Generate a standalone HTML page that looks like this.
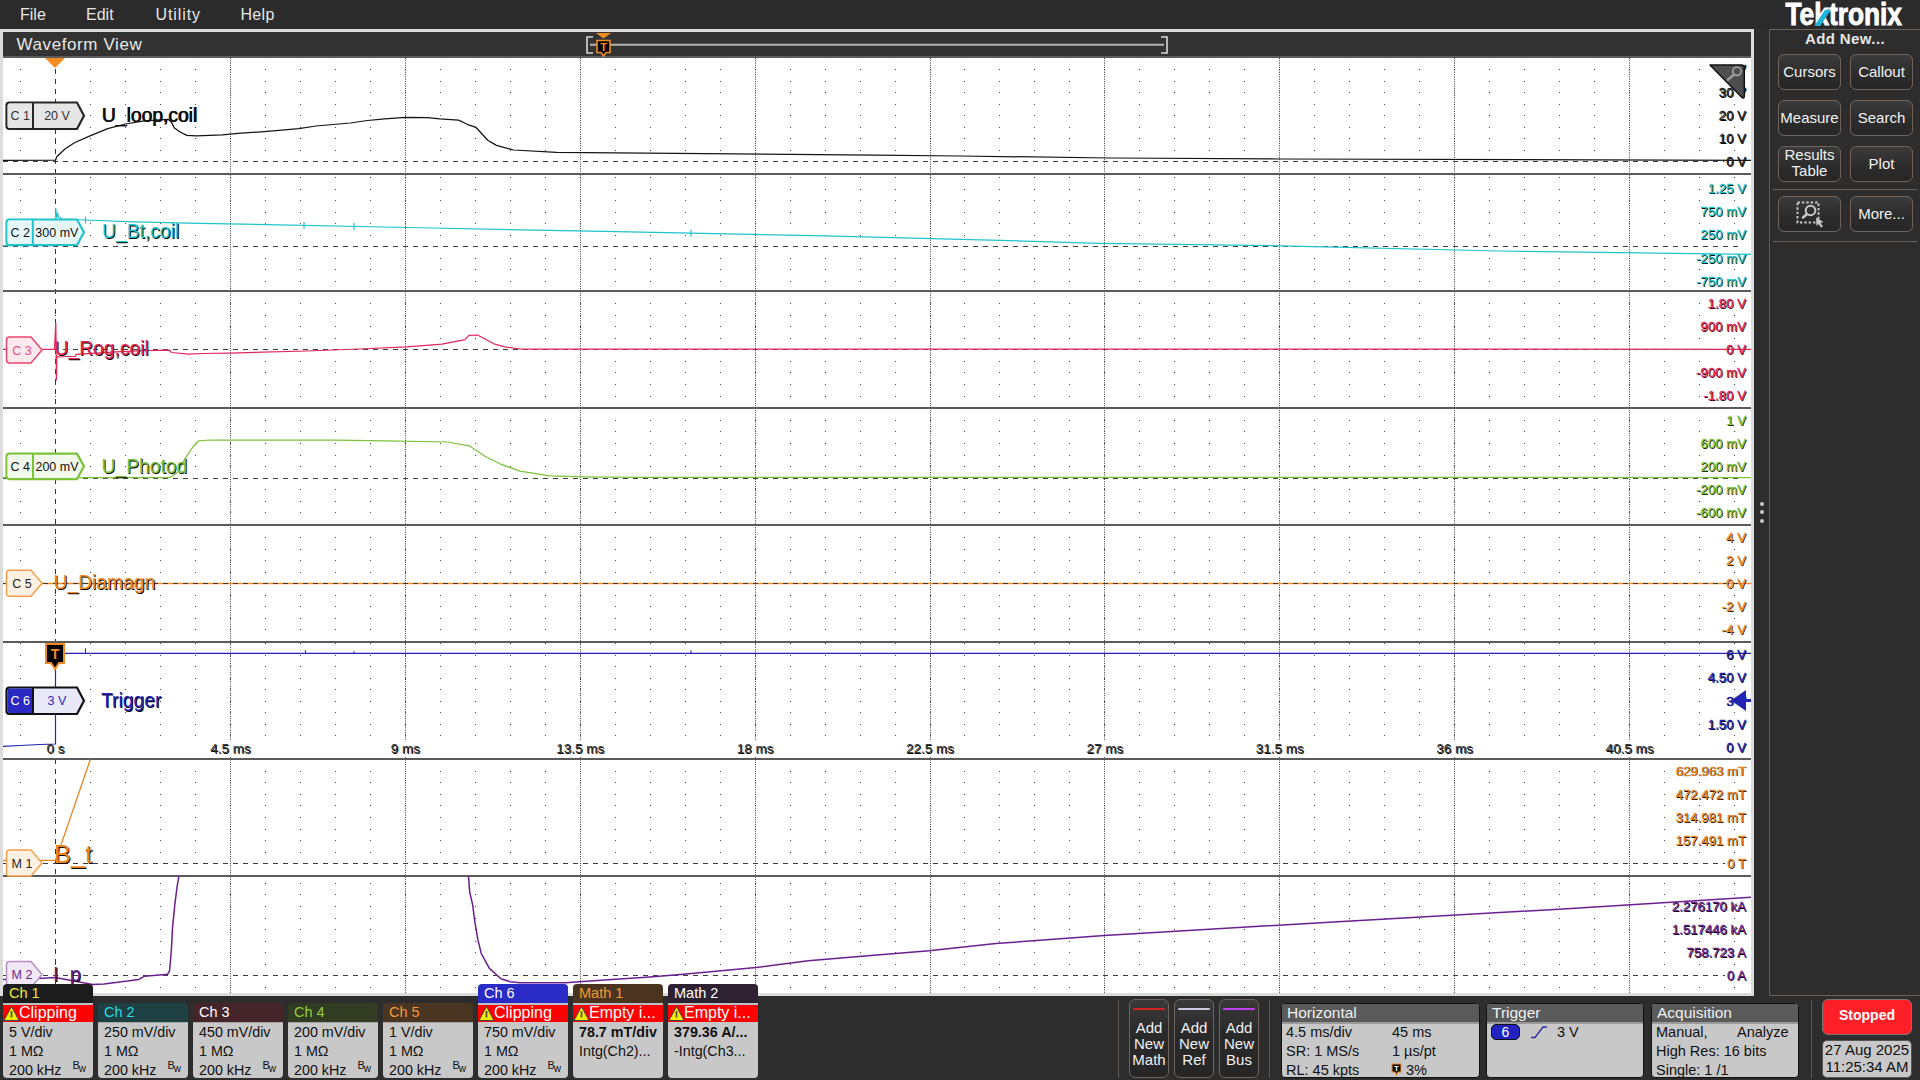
<!DOCTYPE html>
<html><head><meta charset="utf-8">
<style>
*{margin:0;padding:0;box-sizing:border-box}
html,body{width:1920px;height:1080px;overflow:hidden;background:#2d2d2d;font-family:"Liberation Sans", sans-serif;}
.abs{position:absolute}
#menu{position:absolute;left:0;top:0;width:1920px;height:29px;background:#2b2b2b;}
#menu span{position:absolute;top:5.5px;font-size:16px;color:#e6e6e6;}
#win{position:absolute;left:0;top:29px;width:1754px;height:967px;background:#dcdcdc;}
#title{position:absolute;left:3px;top:3px;width:1748px;height:24px;background:#333;}
#title .t{position:absolute;left:13.5px;top:3px;font-size:17px;color:#e8e8e8;letter-spacing:0.6px}
#grat{position:absolute;left:0;top:0;}
#side{position:absolute;left:1769px;top:29px;width:151px;height:967px;border-left:1px solid #5c5f62;border-top:1px solid #6a625c;border-bottom:1px solid #6a625c;}
.btn{position:absolute;width:63px;height:36px;border-radius:6px;border:1px solid #6e645c;background:linear-gradient(#3b3b3b,#2b2b2b 60%,#262626);color:#f2f2f2;font-size:15px;text-align:center;}
.bb{position:absolute;top:984px;width:90px;height:94px;}
.bh{position:absolute;left:0;width:90px;height:19px;font-size:15px;padding-left:6px;line-height:19px;}
.bbody{position:absolute;left:0;top:37px;width:90px;height:57px;background:#c8c8c8;border-radius:0 0 4px 4px;font-size:14.5px;color:#111;padding-left:6px;line-height:19px;}
.warn{position:absolute;left:0;top:21px;width:90px;height:17px;background:#f00;color:#fff;font-size:15px;line-height:17px;padding-left:19px;}
</style></head><body>
<div id="menu">
 <span style="left:20px">File</span><span style="left:86px">Edit</span><span style="left:155.5px;letter-spacing:0.9px">Utility</span><span style="left:240.5px;letter-spacing:0.3px">Help</span>
</div>
<div id="win">
 <div id="title"><div class="t">Waveform View</div></div>
</div>
<svg id="grat" width="1920" height="1080" style="position:absolute;left:0;top:0" font-family='"Liberation Sans", sans-serif'>
<rect x="3" y="56" width="1748" height="2" fill="#5c5c5c"/>
<rect x="3" y="58" width="1748" height="935" fill="#fff"/>
<g>
<line x1="590" y1="44.8" x2="1164" y2="44.8" stroke="#b4b4b4" stroke-width="2"/>
<path d="M593 37 H587 V53 H593" fill="none" stroke="#d8d8d8" stroke-width="1.6"/>
<path d="M1161 37 H1167 V53 H1161" fill="none" stroke="#d8d8d8" stroke-width="1.6"/>
<path d="M596 33 H611 L603.5 38.5 Z" fill="#f78c20"/>
<path d="M597 40.5 H610 V52.5 H606 L603.5 56 L601 52.5 H597 Z" fill="#000" stroke="#f08a24" stroke-width="1.6"/>
<text x="603.5" y="51" font-size="11" font-weight="bold" fill="#f08a24" text-anchor="middle">T</text>
</g>
<path fill="#4a4a4a" d="M20 150h1v1h-1zM55 150h1v1h-1zM90 150h1v1h-1zM125 150h1v1h-1zM160 150h1v1h-1zM195 150h1v1h-1zM230 150h1v1h-1zM265 150h1v1h-1zM300 150h1v1h-1zM335 150h1v1h-1zM370 150h1v1h-1zM405 150h1v1h-1zM440 150h1v1h-1zM475 150h1v1h-1zM510 150h1v1h-1zM545 150h1v1h-1zM580 150h1v1h-1zM615 150h1v1h-1zM650 150h1v1h-1zM685 150h1v1h-1zM720 150h1v1h-1zM755 150h1v1h-1zM790 150h1v1h-1zM825 150h1v1h-1zM860 150h1v1h-1zM895 150h1v1h-1zM930 150h1v1h-1zM964 150h1v1h-1zM999 150h1v1h-1zM1034 150h1v1h-1zM1069 150h1v1h-1zM1104 150h1v1h-1zM1139 150h1v1h-1zM1174 150h1v1h-1zM1209 150h1v1h-1zM1244 150h1v1h-1zM1279 150h1v1h-1zM1314 150h1v1h-1zM1349 150h1v1h-1zM1384 150h1v1h-1zM1419 150h1v1h-1zM1454 150h1v1h-1zM1489 150h1v1h-1zM1524 150h1v1h-1zM1559 150h1v1h-1zM1594 150h1v1h-1zM1629 150h1v1h-1zM1664 150h1v1h-1zM1699 150h1v1h-1zM1734 150h1v1h-1zM20 138h1v1h-1zM55 138h1v1h-1zM90 138h1v1h-1zM125 138h1v1h-1zM160 138h1v1h-1zM195 138h1v1h-1zM230 138h1v1h-1zM265 138h1v1h-1zM300 138h1v1h-1zM335 138h1v1h-1zM370 138h1v1h-1zM405 138h1v1h-1zM440 138h1v1h-1zM475 138h1v1h-1zM510 138h1v1h-1zM545 138h1v1h-1zM580 138h1v1h-1zM615 138h1v1h-1zM650 138h1v1h-1zM685 138h1v1h-1zM720 138h1v1h-1zM755 138h1v1h-1zM790 138h1v1h-1zM825 138h1v1h-1zM860 138h1v1h-1zM895 138h1v1h-1zM930 138h1v1h-1zM964 138h1v1h-1zM999 138h1v1h-1zM1034 138h1v1h-1zM1069 138h1v1h-1zM1104 138h1v1h-1zM1139 138h1v1h-1zM1174 138h1v1h-1zM1209 138h1v1h-1zM1244 138h1v1h-1zM1279 138h1v1h-1zM1314 138h1v1h-1zM1349 138h1v1h-1zM1384 138h1v1h-1zM1419 138h1v1h-1zM1454 138h1v1h-1zM1489 138h1v1h-1zM1524 138h1v1h-1zM1559 138h1v1h-1zM1594 138h1v1h-1zM1629 138h1v1h-1zM1664 138h1v1h-1zM1699 138h1v1h-1zM1734 138h1v1h-1zM20 127h1v1h-1zM55 127h1v1h-1zM90 127h1v1h-1zM125 127h1v1h-1zM160 127h1v1h-1zM195 127h1v1h-1zM230 127h1v1h-1zM265 127h1v1h-1zM300 127h1v1h-1zM335 127h1v1h-1zM370 127h1v1h-1zM405 127h1v1h-1zM440 127h1v1h-1zM475 127h1v1h-1zM510 127h1v1h-1zM545 127h1v1h-1zM580 127h1v1h-1zM615 127h1v1h-1zM650 127h1v1h-1zM685 127h1v1h-1zM720 127h1v1h-1zM755 127h1v1h-1zM790 127h1v1h-1zM825 127h1v1h-1zM860 127h1v1h-1zM895 127h1v1h-1zM930 127h1v1h-1zM964 127h1v1h-1zM999 127h1v1h-1zM1034 127h1v1h-1zM1069 127h1v1h-1zM1104 127h1v1h-1zM1139 127h1v1h-1zM1174 127h1v1h-1zM1209 127h1v1h-1zM1244 127h1v1h-1zM1279 127h1v1h-1zM1314 127h1v1h-1zM1349 127h1v1h-1zM1384 127h1v1h-1zM1419 127h1v1h-1zM1454 127h1v1h-1zM1489 127h1v1h-1zM1524 127h1v1h-1zM1559 127h1v1h-1zM1594 127h1v1h-1zM1629 127h1v1h-1zM1664 127h1v1h-1zM1699 127h1v1h-1zM1734 127h1v1h-1zM20 115h1v1h-1zM55 115h1v1h-1zM90 115h1v1h-1zM125 115h1v1h-1zM160 115h1v1h-1zM195 115h1v1h-1zM230 115h1v1h-1zM265 115h1v1h-1zM300 115h1v1h-1zM335 115h1v1h-1zM370 115h1v1h-1zM405 115h1v1h-1zM440 115h1v1h-1zM475 115h1v1h-1zM510 115h1v1h-1zM545 115h1v1h-1zM580 115h1v1h-1zM615 115h1v1h-1zM650 115h1v1h-1zM685 115h1v1h-1zM720 115h1v1h-1zM755 115h1v1h-1zM790 115h1v1h-1zM825 115h1v1h-1zM860 115h1v1h-1zM895 115h1v1h-1zM930 115h1v1h-1zM964 115h1v1h-1zM999 115h1v1h-1zM1034 115h1v1h-1zM1069 115h1v1h-1zM1104 115h1v1h-1zM1139 115h1v1h-1zM1174 115h1v1h-1zM1209 115h1v1h-1zM1244 115h1v1h-1zM1279 115h1v1h-1zM1314 115h1v1h-1zM1349 115h1v1h-1zM1384 115h1v1h-1zM1419 115h1v1h-1zM1454 115h1v1h-1zM1489 115h1v1h-1zM1524 115h1v1h-1zM1559 115h1v1h-1zM1594 115h1v1h-1zM1629 115h1v1h-1zM1664 115h1v1h-1zM1699 115h1v1h-1zM1734 115h1v1h-1zM20 104h1v1h-1zM55 104h1v1h-1zM90 104h1v1h-1zM125 104h1v1h-1zM160 104h1v1h-1zM195 104h1v1h-1zM230 104h1v1h-1zM265 104h1v1h-1zM300 104h1v1h-1zM335 104h1v1h-1zM370 104h1v1h-1zM405 104h1v1h-1zM440 104h1v1h-1zM475 104h1v1h-1zM510 104h1v1h-1zM545 104h1v1h-1zM580 104h1v1h-1zM615 104h1v1h-1zM650 104h1v1h-1zM685 104h1v1h-1zM720 104h1v1h-1zM755 104h1v1h-1zM790 104h1v1h-1zM825 104h1v1h-1zM860 104h1v1h-1zM895 104h1v1h-1zM930 104h1v1h-1zM964 104h1v1h-1zM999 104h1v1h-1zM1034 104h1v1h-1zM1069 104h1v1h-1zM1104 104h1v1h-1zM1139 104h1v1h-1zM1174 104h1v1h-1zM1209 104h1v1h-1zM1244 104h1v1h-1zM1279 104h1v1h-1zM1314 104h1v1h-1zM1349 104h1v1h-1zM1384 104h1v1h-1zM1419 104h1v1h-1zM1454 104h1v1h-1zM1489 104h1v1h-1zM1524 104h1v1h-1zM1559 104h1v1h-1zM1594 104h1v1h-1zM1629 104h1v1h-1zM1664 104h1v1h-1zM1699 104h1v1h-1zM1734 104h1v1h-1zM20 92h1v1h-1zM55 92h1v1h-1zM90 92h1v1h-1zM125 92h1v1h-1zM160 92h1v1h-1zM195 92h1v1h-1zM230 92h1v1h-1zM265 92h1v1h-1zM300 92h1v1h-1zM335 92h1v1h-1zM370 92h1v1h-1zM405 92h1v1h-1zM440 92h1v1h-1zM475 92h1v1h-1zM510 92h1v1h-1zM545 92h1v1h-1zM580 92h1v1h-1zM615 92h1v1h-1zM650 92h1v1h-1zM685 92h1v1h-1zM720 92h1v1h-1zM755 92h1v1h-1zM790 92h1v1h-1zM825 92h1v1h-1zM860 92h1v1h-1zM895 92h1v1h-1zM930 92h1v1h-1zM964 92h1v1h-1zM999 92h1v1h-1zM1034 92h1v1h-1zM1069 92h1v1h-1zM1104 92h1v1h-1zM1139 92h1v1h-1zM1174 92h1v1h-1zM1209 92h1v1h-1zM1244 92h1v1h-1zM1279 92h1v1h-1zM1314 92h1v1h-1zM1349 92h1v1h-1zM1384 92h1v1h-1zM1419 92h1v1h-1zM1454 92h1v1h-1zM1489 92h1v1h-1zM1524 92h1v1h-1zM1559 92h1v1h-1zM1594 92h1v1h-1zM1629 92h1v1h-1zM1664 92h1v1h-1zM1699 92h1v1h-1zM1734 92h1v1h-1zM20 81h1v1h-1zM55 81h1v1h-1zM90 81h1v1h-1zM125 81h1v1h-1zM160 81h1v1h-1zM195 81h1v1h-1zM230 81h1v1h-1zM265 81h1v1h-1zM300 81h1v1h-1zM335 81h1v1h-1zM370 81h1v1h-1zM405 81h1v1h-1zM440 81h1v1h-1zM475 81h1v1h-1zM510 81h1v1h-1zM545 81h1v1h-1zM580 81h1v1h-1zM615 81h1v1h-1zM650 81h1v1h-1zM685 81h1v1h-1zM720 81h1v1h-1zM755 81h1v1h-1zM790 81h1v1h-1zM825 81h1v1h-1zM860 81h1v1h-1zM895 81h1v1h-1zM930 81h1v1h-1zM964 81h1v1h-1zM999 81h1v1h-1zM1034 81h1v1h-1zM1069 81h1v1h-1zM1104 81h1v1h-1zM1139 81h1v1h-1zM1174 81h1v1h-1zM1209 81h1v1h-1zM1244 81h1v1h-1zM1279 81h1v1h-1zM1314 81h1v1h-1zM1349 81h1v1h-1zM1384 81h1v1h-1zM1419 81h1v1h-1zM1454 81h1v1h-1zM1489 81h1v1h-1zM1524 81h1v1h-1zM1559 81h1v1h-1zM1594 81h1v1h-1zM1629 81h1v1h-1zM1664 81h1v1h-1zM1699 81h1v1h-1zM1734 81h1v1h-1zM20 69h1v1h-1zM55 69h1v1h-1zM90 69h1v1h-1zM125 69h1v1h-1zM160 69h1v1h-1zM195 69h1v1h-1zM230 69h1v1h-1zM265 69h1v1h-1zM300 69h1v1h-1zM335 69h1v1h-1zM370 69h1v1h-1zM405 69h1v1h-1zM440 69h1v1h-1zM475 69h1v1h-1zM510 69h1v1h-1zM545 69h1v1h-1zM580 69h1v1h-1zM615 69h1v1h-1zM650 69h1v1h-1zM685 69h1v1h-1zM720 69h1v1h-1zM755 69h1v1h-1zM790 69h1v1h-1zM825 69h1v1h-1zM860 69h1v1h-1zM895 69h1v1h-1zM930 69h1v1h-1zM964 69h1v1h-1zM999 69h1v1h-1zM1034 69h1v1h-1zM1069 69h1v1h-1zM1104 69h1v1h-1zM1139 69h1v1h-1zM1174 69h1v1h-1zM1209 69h1v1h-1zM1244 69h1v1h-1zM1279 69h1v1h-1zM1314 69h1v1h-1zM1349 69h1v1h-1zM1384 69h1v1h-1zM1419 69h1v1h-1zM1454 69h1v1h-1zM1489 69h1v1h-1zM1524 69h1v1h-1zM1559 69h1v1h-1zM1594 69h1v1h-1zM1629 69h1v1h-1zM1664 69h1v1h-1zM1699 69h1v1h-1zM1734 69h1v1h-1zM20 57h1v1h-1zM55 57h1v1h-1zM90 57h1v1h-1zM125 57h1v1h-1zM160 57h1v1h-1zM195 57h1v1h-1zM230 57h1v1h-1zM265 57h1v1h-1zM300 57h1v1h-1zM335 57h1v1h-1zM370 57h1v1h-1zM405 57h1v1h-1zM440 57h1v1h-1zM475 57h1v1h-1zM510 57h1v1h-1zM545 57h1v1h-1zM580 57h1v1h-1zM615 57h1v1h-1zM650 57h1v1h-1zM685 57h1v1h-1zM720 57h1v1h-1zM755 57h1v1h-1zM790 57h1v1h-1zM825 57h1v1h-1zM860 57h1v1h-1zM895 57h1v1h-1zM930 57h1v1h-1zM964 57h1v1h-1zM999 57h1v1h-1zM1034 57h1v1h-1zM1069 57h1v1h-1zM1104 57h1v1h-1zM1139 57h1v1h-1zM1174 57h1v1h-1zM1209 57h1v1h-1zM1244 57h1v1h-1zM1279 57h1v1h-1zM1314 57h1v1h-1zM1349 57h1v1h-1zM1384 57h1v1h-1zM1419 57h1v1h-1zM1454 57h1v1h-1zM1489 57h1v1h-1zM1524 57h1v1h-1zM1559 57h1v1h-1zM1594 57h1v1h-1zM1629 57h1v1h-1zM1664 57h1v1h-1zM1699 57h1v1h-1zM1734 57h1v1h-1zM20 173h1v1h-1zM55 173h1v1h-1zM90 173h1v1h-1zM125 173h1v1h-1zM160 173h1v1h-1zM195 173h1v1h-1zM230 173h1v1h-1zM265 173h1v1h-1zM300 173h1v1h-1zM335 173h1v1h-1zM370 173h1v1h-1zM405 173h1v1h-1zM440 173h1v1h-1zM475 173h1v1h-1zM510 173h1v1h-1zM545 173h1v1h-1zM580 173h1v1h-1zM615 173h1v1h-1zM650 173h1v1h-1zM685 173h1v1h-1zM720 173h1v1h-1zM755 173h1v1h-1zM790 173h1v1h-1zM825 173h1v1h-1zM860 173h1v1h-1zM895 173h1v1h-1zM930 173h1v1h-1zM964 173h1v1h-1zM999 173h1v1h-1zM1034 173h1v1h-1zM1069 173h1v1h-1zM1104 173h1v1h-1zM1139 173h1v1h-1zM1174 173h1v1h-1zM1209 173h1v1h-1zM1244 173h1v1h-1zM1279 173h1v1h-1zM1314 173h1v1h-1zM1349 173h1v1h-1zM1384 173h1v1h-1zM1419 173h1v1h-1zM1454 173h1v1h-1zM1489 173h1v1h-1zM1524 173h1v1h-1zM1559 173h1v1h-1zM1594 173h1v1h-1zM1629 173h1v1h-1zM1664 173h1v1h-1zM1699 173h1v1h-1zM1734 173h1v1h-1zM20 235h1v1h-1zM55 235h1v1h-1zM90 235h1v1h-1zM125 235h1v1h-1zM160 235h1v1h-1zM195 235h1v1h-1zM230 235h1v1h-1zM265 235h1v1h-1zM300 235h1v1h-1zM335 235h1v1h-1zM370 235h1v1h-1zM405 235h1v1h-1zM440 235h1v1h-1zM475 235h1v1h-1zM510 235h1v1h-1zM545 235h1v1h-1zM580 235h1v1h-1zM615 235h1v1h-1zM650 235h1v1h-1zM685 235h1v1h-1zM720 235h1v1h-1zM755 235h1v1h-1zM790 235h1v1h-1zM825 235h1v1h-1zM860 235h1v1h-1zM895 235h1v1h-1zM930 235h1v1h-1zM964 235h1v1h-1zM999 235h1v1h-1zM1034 235h1v1h-1zM1069 235h1v1h-1zM1104 235h1v1h-1zM1139 235h1v1h-1zM1174 235h1v1h-1zM1209 235h1v1h-1zM1244 235h1v1h-1zM1279 235h1v1h-1zM1314 235h1v1h-1zM1349 235h1v1h-1zM1384 235h1v1h-1zM1419 235h1v1h-1zM1454 235h1v1h-1zM1489 235h1v1h-1zM1524 235h1v1h-1zM1559 235h1v1h-1zM1594 235h1v1h-1zM1629 235h1v1h-1zM1664 235h1v1h-1zM1699 235h1v1h-1zM1734 235h1v1h-1zM20 223h1v1h-1zM55 223h1v1h-1zM90 223h1v1h-1zM125 223h1v1h-1zM160 223h1v1h-1zM195 223h1v1h-1zM230 223h1v1h-1zM265 223h1v1h-1zM300 223h1v1h-1zM335 223h1v1h-1zM370 223h1v1h-1zM405 223h1v1h-1zM440 223h1v1h-1zM475 223h1v1h-1zM510 223h1v1h-1zM545 223h1v1h-1zM580 223h1v1h-1zM615 223h1v1h-1zM650 223h1v1h-1zM685 223h1v1h-1zM720 223h1v1h-1zM755 223h1v1h-1zM790 223h1v1h-1zM825 223h1v1h-1zM860 223h1v1h-1zM895 223h1v1h-1zM930 223h1v1h-1zM964 223h1v1h-1zM999 223h1v1h-1zM1034 223h1v1h-1zM1069 223h1v1h-1zM1104 223h1v1h-1zM1139 223h1v1h-1zM1174 223h1v1h-1zM1209 223h1v1h-1zM1244 223h1v1h-1zM1279 223h1v1h-1zM1314 223h1v1h-1zM1349 223h1v1h-1zM1384 223h1v1h-1zM1419 223h1v1h-1zM1454 223h1v1h-1zM1489 223h1v1h-1zM1524 223h1v1h-1zM1559 223h1v1h-1zM1594 223h1v1h-1zM1629 223h1v1h-1zM1664 223h1v1h-1zM1699 223h1v1h-1zM1734 223h1v1h-1zM20 212h1v1h-1zM55 212h1v1h-1zM90 212h1v1h-1zM125 212h1v1h-1zM160 212h1v1h-1zM195 212h1v1h-1zM230 212h1v1h-1zM265 212h1v1h-1zM300 212h1v1h-1zM335 212h1v1h-1zM370 212h1v1h-1zM405 212h1v1h-1zM440 212h1v1h-1zM475 212h1v1h-1zM510 212h1v1h-1zM545 212h1v1h-1zM580 212h1v1h-1zM615 212h1v1h-1zM650 212h1v1h-1zM685 212h1v1h-1zM720 212h1v1h-1zM755 212h1v1h-1zM790 212h1v1h-1zM825 212h1v1h-1zM860 212h1v1h-1zM895 212h1v1h-1zM930 212h1v1h-1zM964 212h1v1h-1zM999 212h1v1h-1zM1034 212h1v1h-1zM1069 212h1v1h-1zM1104 212h1v1h-1zM1139 212h1v1h-1zM1174 212h1v1h-1zM1209 212h1v1h-1zM1244 212h1v1h-1zM1279 212h1v1h-1zM1314 212h1v1h-1zM1349 212h1v1h-1zM1384 212h1v1h-1zM1419 212h1v1h-1zM1454 212h1v1h-1zM1489 212h1v1h-1zM1524 212h1v1h-1zM1559 212h1v1h-1zM1594 212h1v1h-1zM1629 212h1v1h-1zM1664 212h1v1h-1zM1699 212h1v1h-1zM1734 212h1v1h-1zM20 200h1v1h-1zM55 200h1v1h-1zM90 200h1v1h-1zM125 200h1v1h-1zM160 200h1v1h-1zM195 200h1v1h-1zM230 200h1v1h-1zM265 200h1v1h-1zM300 200h1v1h-1zM335 200h1v1h-1zM370 200h1v1h-1zM405 200h1v1h-1zM440 200h1v1h-1zM475 200h1v1h-1zM510 200h1v1h-1zM545 200h1v1h-1zM580 200h1v1h-1zM615 200h1v1h-1zM650 200h1v1h-1zM685 200h1v1h-1zM720 200h1v1h-1zM755 200h1v1h-1zM790 200h1v1h-1zM825 200h1v1h-1zM860 200h1v1h-1zM895 200h1v1h-1zM930 200h1v1h-1zM964 200h1v1h-1zM999 200h1v1h-1zM1034 200h1v1h-1zM1069 200h1v1h-1zM1104 200h1v1h-1zM1139 200h1v1h-1zM1174 200h1v1h-1zM1209 200h1v1h-1zM1244 200h1v1h-1zM1279 200h1v1h-1zM1314 200h1v1h-1zM1349 200h1v1h-1zM1384 200h1v1h-1zM1419 200h1v1h-1zM1454 200h1v1h-1zM1489 200h1v1h-1zM1524 200h1v1h-1zM1559 200h1v1h-1zM1594 200h1v1h-1zM1629 200h1v1h-1zM1664 200h1v1h-1zM1699 200h1v1h-1zM1734 200h1v1h-1zM20 189h1v1h-1zM55 189h1v1h-1zM90 189h1v1h-1zM125 189h1v1h-1zM160 189h1v1h-1zM195 189h1v1h-1zM230 189h1v1h-1zM265 189h1v1h-1zM300 189h1v1h-1zM335 189h1v1h-1zM370 189h1v1h-1zM405 189h1v1h-1zM440 189h1v1h-1zM475 189h1v1h-1zM510 189h1v1h-1zM545 189h1v1h-1zM580 189h1v1h-1zM615 189h1v1h-1zM650 189h1v1h-1zM685 189h1v1h-1zM720 189h1v1h-1zM755 189h1v1h-1zM790 189h1v1h-1zM825 189h1v1h-1zM860 189h1v1h-1zM895 189h1v1h-1zM930 189h1v1h-1zM964 189h1v1h-1zM999 189h1v1h-1zM1034 189h1v1h-1zM1069 189h1v1h-1zM1104 189h1v1h-1zM1139 189h1v1h-1zM1174 189h1v1h-1zM1209 189h1v1h-1zM1244 189h1v1h-1zM1279 189h1v1h-1zM1314 189h1v1h-1zM1349 189h1v1h-1zM1384 189h1v1h-1zM1419 189h1v1h-1zM1454 189h1v1h-1zM1489 189h1v1h-1zM1524 189h1v1h-1zM1559 189h1v1h-1zM1594 189h1v1h-1zM1629 189h1v1h-1zM1664 189h1v1h-1zM1699 189h1v1h-1zM1734 189h1v1h-1zM20 177h1v1h-1zM55 177h1v1h-1zM90 177h1v1h-1zM125 177h1v1h-1zM160 177h1v1h-1zM195 177h1v1h-1zM230 177h1v1h-1zM265 177h1v1h-1zM300 177h1v1h-1zM335 177h1v1h-1zM370 177h1v1h-1zM405 177h1v1h-1zM440 177h1v1h-1zM475 177h1v1h-1zM510 177h1v1h-1zM545 177h1v1h-1zM580 177h1v1h-1zM615 177h1v1h-1zM650 177h1v1h-1zM685 177h1v1h-1zM720 177h1v1h-1zM755 177h1v1h-1zM790 177h1v1h-1zM825 177h1v1h-1zM860 177h1v1h-1zM895 177h1v1h-1zM930 177h1v1h-1zM964 177h1v1h-1zM999 177h1v1h-1zM1034 177h1v1h-1zM1069 177h1v1h-1zM1104 177h1v1h-1zM1139 177h1v1h-1zM1174 177h1v1h-1zM1209 177h1v1h-1zM1244 177h1v1h-1zM1279 177h1v1h-1zM1314 177h1v1h-1zM1349 177h1v1h-1zM1384 177h1v1h-1zM1419 177h1v1h-1zM1454 177h1v1h-1zM1489 177h1v1h-1zM1524 177h1v1h-1zM1559 177h1v1h-1zM1594 177h1v1h-1zM1629 177h1v1h-1zM1664 177h1v1h-1zM1699 177h1v1h-1zM1734 177h1v1h-1zM20 258h1v1h-1zM55 258h1v1h-1zM90 258h1v1h-1zM125 258h1v1h-1zM160 258h1v1h-1zM195 258h1v1h-1zM230 258h1v1h-1zM265 258h1v1h-1zM300 258h1v1h-1zM335 258h1v1h-1zM370 258h1v1h-1zM405 258h1v1h-1zM440 258h1v1h-1zM475 258h1v1h-1zM510 258h1v1h-1zM545 258h1v1h-1zM580 258h1v1h-1zM615 258h1v1h-1zM650 258h1v1h-1zM685 258h1v1h-1zM720 258h1v1h-1zM755 258h1v1h-1zM790 258h1v1h-1zM825 258h1v1h-1zM860 258h1v1h-1zM895 258h1v1h-1zM930 258h1v1h-1zM964 258h1v1h-1zM999 258h1v1h-1zM1034 258h1v1h-1zM1069 258h1v1h-1zM1104 258h1v1h-1zM1139 258h1v1h-1zM1174 258h1v1h-1zM1209 258h1v1h-1zM1244 258h1v1h-1zM1279 258h1v1h-1zM1314 258h1v1h-1zM1349 258h1v1h-1zM1384 258h1v1h-1zM1419 258h1v1h-1zM1454 258h1v1h-1zM1489 258h1v1h-1zM1524 258h1v1h-1zM1559 258h1v1h-1zM1594 258h1v1h-1zM1629 258h1v1h-1zM1664 258h1v1h-1zM1699 258h1v1h-1zM1734 258h1v1h-1zM20 269h1v1h-1zM55 269h1v1h-1zM90 269h1v1h-1zM125 269h1v1h-1zM160 269h1v1h-1zM195 269h1v1h-1zM230 269h1v1h-1zM265 269h1v1h-1zM300 269h1v1h-1zM335 269h1v1h-1zM370 269h1v1h-1zM405 269h1v1h-1zM440 269h1v1h-1zM475 269h1v1h-1zM510 269h1v1h-1zM545 269h1v1h-1zM580 269h1v1h-1zM615 269h1v1h-1zM650 269h1v1h-1zM685 269h1v1h-1zM720 269h1v1h-1zM755 269h1v1h-1zM790 269h1v1h-1zM825 269h1v1h-1zM860 269h1v1h-1zM895 269h1v1h-1zM930 269h1v1h-1zM964 269h1v1h-1zM999 269h1v1h-1zM1034 269h1v1h-1zM1069 269h1v1h-1zM1104 269h1v1h-1zM1139 269h1v1h-1zM1174 269h1v1h-1zM1209 269h1v1h-1zM1244 269h1v1h-1zM1279 269h1v1h-1zM1314 269h1v1h-1zM1349 269h1v1h-1zM1384 269h1v1h-1zM1419 269h1v1h-1zM1454 269h1v1h-1zM1489 269h1v1h-1zM1524 269h1v1h-1zM1559 269h1v1h-1zM1594 269h1v1h-1zM1629 269h1v1h-1zM1664 269h1v1h-1zM1699 269h1v1h-1zM1734 269h1v1h-1zM20 281h1v1h-1zM55 281h1v1h-1zM90 281h1v1h-1zM125 281h1v1h-1zM160 281h1v1h-1zM195 281h1v1h-1zM230 281h1v1h-1zM265 281h1v1h-1zM300 281h1v1h-1zM335 281h1v1h-1zM370 281h1v1h-1zM405 281h1v1h-1zM440 281h1v1h-1zM475 281h1v1h-1zM510 281h1v1h-1zM545 281h1v1h-1zM580 281h1v1h-1zM615 281h1v1h-1zM650 281h1v1h-1zM685 281h1v1h-1zM720 281h1v1h-1zM755 281h1v1h-1zM790 281h1v1h-1zM825 281h1v1h-1zM860 281h1v1h-1zM895 281h1v1h-1zM930 281h1v1h-1zM964 281h1v1h-1zM999 281h1v1h-1zM1034 281h1v1h-1zM1069 281h1v1h-1zM1104 281h1v1h-1zM1139 281h1v1h-1zM1174 281h1v1h-1zM1209 281h1v1h-1zM1244 281h1v1h-1zM1279 281h1v1h-1zM1314 281h1v1h-1zM1349 281h1v1h-1zM1384 281h1v1h-1zM1419 281h1v1h-1zM1454 281h1v1h-1zM1489 281h1v1h-1zM1524 281h1v1h-1zM1559 281h1v1h-1zM1594 281h1v1h-1zM1629 281h1v1h-1zM1664 281h1v1h-1zM1699 281h1v1h-1zM1734 281h1v1h-1zM20 338h1v1h-1zM55 338h1v1h-1zM90 338h1v1h-1zM125 338h1v1h-1zM160 338h1v1h-1zM195 338h1v1h-1zM230 338h1v1h-1zM265 338h1v1h-1zM300 338h1v1h-1zM335 338h1v1h-1zM370 338h1v1h-1zM405 338h1v1h-1zM440 338h1v1h-1zM475 338h1v1h-1zM510 338h1v1h-1zM545 338h1v1h-1zM580 338h1v1h-1zM615 338h1v1h-1zM650 338h1v1h-1zM685 338h1v1h-1zM720 338h1v1h-1zM755 338h1v1h-1zM790 338h1v1h-1zM825 338h1v1h-1zM860 338h1v1h-1zM895 338h1v1h-1zM930 338h1v1h-1zM964 338h1v1h-1zM999 338h1v1h-1zM1034 338h1v1h-1zM1069 338h1v1h-1zM1104 338h1v1h-1zM1139 338h1v1h-1zM1174 338h1v1h-1zM1209 338h1v1h-1zM1244 338h1v1h-1zM1279 338h1v1h-1zM1314 338h1v1h-1zM1349 338h1v1h-1zM1384 338h1v1h-1zM1419 338h1v1h-1zM1454 338h1v1h-1zM1489 338h1v1h-1zM1524 338h1v1h-1zM1559 338h1v1h-1zM1594 338h1v1h-1zM1629 338h1v1h-1zM1664 338h1v1h-1zM1699 338h1v1h-1zM1734 338h1v1h-1zM20 326h1v1h-1zM55 326h1v1h-1zM90 326h1v1h-1zM125 326h1v1h-1zM160 326h1v1h-1zM195 326h1v1h-1zM230 326h1v1h-1zM265 326h1v1h-1zM300 326h1v1h-1zM335 326h1v1h-1zM370 326h1v1h-1zM405 326h1v1h-1zM440 326h1v1h-1zM475 326h1v1h-1zM510 326h1v1h-1zM545 326h1v1h-1zM580 326h1v1h-1zM615 326h1v1h-1zM650 326h1v1h-1zM685 326h1v1h-1zM720 326h1v1h-1zM755 326h1v1h-1zM790 326h1v1h-1zM825 326h1v1h-1zM860 326h1v1h-1zM895 326h1v1h-1zM930 326h1v1h-1zM964 326h1v1h-1zM999 326h1v1h-1zM1034 326h1v1h-1zM1069 326h1v1h-1zM1104 326h1v1h-1zM1139 326h1v1h-1zM1174 326h1v1h-1zM1209 326h1v1h-1zM1244 326h1v1h-1zM1279 326h1v1h-1zM1314 326h1v1h-1zM1349 326h1v1h-1zM1384 326h1v1h-1zM1419 326h1v1h-1zM1454 326h1v1h-1zM1489 326h1v1h-1zM1524 326h1v1h-1zM1559 326h1v1h-1zM1594 326h1v1h-1zM1629 326h1v1h-1zM1664 326h1v1h-1zM1699 326h1v1h-1zM1734 326h1v1h-1zM20 315h1v1h-1zM55 315h1v1h-1zM90 315h1v1h-1zM125 315h1v1h-1zM160 315h1v1h-1zM195 315h1v1h-1zM230 315h1v1h-1zM265 315h1v1h-1zM300 315h1v1h-1zM335 315h1v1h-1zM370 315h1v1h-1zM405 315h1v1h-1zM440 315h1v1h-1zM475 315h1v1h-1zM510 315h1v1h-1zM545 315h1v1h-1zM580 315h1v1h-1zM615 315h1v1h-1zM650 315h1v1h-1zM685 315h1v1h-1zM720 315h1v1h-1zM755 315h1v1h-1zM790 315h1v1h-1zM825 315h1v1h-1zM860 315h1v1h-1zM895 315h1v1h-1zM930 315h1v1h-1zM964 315h1v1h-1zM999 315h1v1h-1zM1034 315h1v1h-1zM1069 315h1v1h-1zM1104 315h1v1h-1zM1139 315h1v1h-1zM1174 315h1v1h-1zM1209 315h1v1h-1zM1244 315h1v1h-1zM1279 315h1v1h-1zM1314 315h1v1h-1zM1349 315h1v1h-1zM1384 315h1v1h-1zM1419 315h1v1h-1zM1454 315h1v1h-1zM1489 315h1v1h-1zM1524 315h1v1h-1zM1559 315h1v1h-1zM1594 315h1v1h-1zM1629 315h1v1h-1zM1664 315h1v1h-1zM1699 315h1v1h-1zM1734 315h1v1h-1zM20 303h1v1h-1zM55 303h1v1h-1zM90 303h1v1h-1zM125 303h1v1h-1zM160 303h1v1h-1zM195 303h1v1h-1zM230 303h1v1h-1zM265 303h1v1h-1zM300 303h1v1h-1zM335 303h1v1h-1zM370 303h1v1h-1zM405 303h1v1h-1zM440 303h1v1h-1zM475 303h1v1h-1zM510 303h1v1h-1zM545 303h1v1h-1zM580 303h1v1h-1zM615 303h1v1h-1zM650 303h1v1h-1zM685 303h1v1h-1zM720 303h1v1h-1zM755 303h1v1h-1zM790 303h1v1h-1zM825 303h1v1h-1zM860 303h1v1h-1zM895 303h1v1h-1zM930 303h1v1h-1zM964 303h1v1h-1zM999 303h1v1h-1zM1034 303h1v1h-1zM1069 303h1v1h-1zM1104 303h1v1h-1zM1139 303h1v1h-1zM1174 303h1v1h-1zM1209 303h1v1h-1zM1244 303h1v1h-1zM1279 303h1v1h-1zM1314 303h1v1h-1zM1349 303h1v1h-1zM1384 303h1v1h-1zM1419 303h1v1h-1zM1454 303h1v1h-1zM1489 303h1v1h-1zM1524 303h1v1h-1zM1559 303h1v1h-1zM1594 303h1v1h-1zM1629 303h1v1h-1zM1664 303h1v1h-1zM1699 303h1v1h-1zM1734 303h1v1h-1zM20 361h1v1h-1zM55 361h1v1h-1zM90 361h1v1h-1zM125 361h1v1h-1zM160 361h1v1h-1zM195 361h1v1h-1zM230 361h1v1h-1zM265 361h1v1h-1zM300 361h1v1h-1zM335 361h1v1h-1zM370 361h1v1h-1zM405 361h1v1h-1zM440 361h1v1h-1zM475 361h1v1h-1zM510 361h1v1h-1zM545 361h1v1h-1zM580 361h1v1h-1zM615 361h1v1h-1zM650 361h1v1h-1zM685 361h1v1h-1zM720 361h1v1h-1zM755 361h1v1h-1zM790 361h1v1h-1zM825 361h1v1h-1zM860 361h1v1h-1zM895 361h1v1h-1zM930 361h1v1h-1zM964 361h1v1h-1zM999 361h1v1h-1zM1034 361h1v1h-1zM1069 361h1v1h-1zM1104 361h1v1h-1zM1139 361h1v1h-1zM1174 361h1v1h-1zM1209 361h1v1h-1zM1244 361h1v1h-1zM1279 361h1v1h-1zM1314 361h1v1h-1zM1349 361h1v1h-1zM1384 361h1v1h-1zM1419 361h1v1h-1zM1454 361h1v1h-1zM1489 361h1v1h-1zM1524 361h1v1h-1zM1559 361h1v1h-1zM1594 361h1v1h-1zM1629 361h1v1h-1zM1664 361h1v1h-1zM1699 361h1v1h-1zM1734 361h1v1h-1zM20 372h1v1h-1zM55 372h1v1h-1zM90 372h1v1h-1zM125 372h1v1h-1zM160 372h1v1h-1zM195 372h1v1h-1zM230 372h1v1h-1zM265 372h1v1h-1zM300 372h1v1h-1zM335 372h1v1h-1zM370 372h1v1h-1zM405 372h1v1h-1zM440 372h1v1h-1zM475 372h1v1h-1zM510 372h1v1h-1zM545 372h1v1h-1zM580 372h1v1h-1zM615 372h1v1h-1zM650 372h1v1h-1zM685 372h1v1h-1zM720 372h1v1h-1zM755 372h1v1h-1zM790 372h1v1h-1zM825 372h1v1h-1zM860 372h1v1h-1zM895 372h1v1h-1zM930 372h1v1h-1zM964 372h1v1h-1zM999 372h1v1h-1zM1034 372h1v1h-1zM1069 372h1v1h-1zM1104 372h1v1h-1zM1139 372h1v1h-1zM1174 372h1v1h-1zM1209 372h1v1h-1zM1244 372h1v1h-1zM1279 372h1v1h-1zM1314 372h1v1h-1zM1349 372h1v1h-1zM1384 372h1v1h-1zM1419 372h1v1h-1zM1454 372h1v1h-1zM1489 372h1v1h-1zM1524 372h1v1h-1zM1559 372h1v1h-1zM1594 372h1v1h-1zM1629 372h1v1h-1zM1664 372h1v1h-1zM1699 372h1v1h-1zM1734 372h1v1h-1zM20 384h1v1h-1zM55 384h1v1h-1zM90 384h1v1h-1zM125 384h1v1h-1zM160 384h1v1h-1zM195 384h1v1h-1zM230 384h1v1h-1zM265 384h1v1h-1zM300 384h1v1h-1zM335 384h1v1h-1zM370 384h1v1h-1zM405 384h1v1h-1zM440 384h1v1h-1zM475 384h1v1h-1zM510 384h1v1h-1zM545 384h1v1h-1zM580 384h1v1h-1zM615 384h1v1h-1zM650 384h1v1h-1zM685 384h1v1h-1zM720 384h1v1h-1zM755 384h1v1h-1zM790 384h1v1h-1zM825 384h1v1h-1zM860 384h1v1h-1zM895 384h1v1h-1zM930 384h1v1h-1zM964 384h1v1h-1zM999 384h1v1h-1zM1034 384h1v1h-1zM1069 384h1v1h-1zM1104 384h1v1h-1zM1139 384h1v1h-1zM1174 384h1v1h-1zM1209 384h1v1h-1zM1244 384h1v1h-1zM1279 384h1v1h-1zM1314 384h1v1h-1zM1349 384h1v1h-1zM1384 384h1v1h-1zM1419 384h1v1h-1zM1454 384h1v1h-1zM1489 384h1v1h-1zM1524 384h1v1h-1zM1559 384h1v1h-1zM1594 384h1v1h-1zM1629 384h1v1h-1zM1664 384h1v1h-1zM1699 384h1v1h-1zM1734 384h1v1h-1zM20 396h1v1h-1zM55 396h1v1h-1zM90 396h1v1h-1zM125 396h1v1h-1zM160 396h1v1h-1zM195 396h1v1h-1zM230 396h1v1h-1zM265 396h1v1h-1zM300 396h1v1h-1zM335 396h1v1h-1zM370 396h1v1h-1zM405 396h1v1h-1zM440 396h1v1h-1zM475 396h1v1h-1zM510 396h1v1h-1zM545 396h1v1h-1zM580 396h1v1h-1zM615 396h1v1h-1zM650 396h1v1h-1zM685 396h1v1h-1zM720 396h1v1h-1zM755 396h1v1h-1zM790 396h1v1h-1zM825 396h1v1h-1zM860 396h1v1h-1zM895 396h1v1h-1zM930 396h1v1h-1zM964 396h1v1h-1zM999 396h1v1h-1zM1034 396h1v1h-1zM1069 396h1v1h-1zM1104 396h1v1h-1zM1139 396h1v1h-1zM1174 396h1v1h-1zM1209 396h1v1h-1zM1244 396h1v1h-1zM1279 396h1v1h-1zM1314 396h1v1h-1zM1349 396h1v1h-1zM1384 396h1v1h-1zM1419 396h1v1h-1zM1454 396h1v1h-1zM1489 396h1v1h-1zM1524 396h1v1h-1zM1559 396h1v1h-1zM1594 396h1v1h-1zM1629 396h1v1h-1zM1664 396h1v1h-1zM1699 396h1v1h-1zM1734 396h1v1h-1zM20 407h1v1h-1zM55 407h1v1h-1zM90 407h1v1h-1zM125 407h1v1h-1zM160 407h1v1h-1zM195 407h1v1h-1zM230 407h1v1h-1zM265 407h1v1h-1zM300 407h1v1h-1zM335 407h1v1h-1zM370 407h1v1h-1zM405 407h1v1h-1zM440 407h1v1h-1zM475 407h1v1h-1zM510 407h1v1h-1zM545 407h1v1h-1zM580 407h1v1h-1zM615 407h1v1h-1zM650 407h1v1h-1zM685 407h1v1h-1zM720 407h1v1h-1zM755 407h1v1h-1zM790 407h1v1h-1zM825 407h1v1h-1zM860 407h1v1h-1zM895 407h1v1h-1zM930 407h1v1h-1zM964 407h1v1h-1zM999 407h1v1h-1zM1034 407h1v1h-1zM1069 407h1v1h-1zM1104 407h1v1h-1zM1139 407h1v1h-1zM1174 407h1v1h-1zM1209 407h1v1h-1zM1244 407h1v1h-1zM1279 407h1v1h-1zM1314 407h1v1h-1zM1349 407h1v1h-1zM1384 407h1v1h-1zM1419 407h1v1h-1zM1454 407h1v1h-1zM1489 407h1v1h-1zM1524 407h1v1h-1zM1559 407h1v1h-1zM1594 407h1v1h-1zM1629 407h1v1h-1zM1664 407h1v1h-1zM1699 407h1v1h-1zM1734 407h1v1h-1zM20 466h1v1h-1zM55 466h1v1h-1zM90 466h1v1h-1zM125 466h1v1h-1zM160 466h1v1h-1zM195 466h1v1h-1zM230 466h1v1h-1zM265 466h1v1h-1zM300 466h1v1h-1zM335 466h1v1h-1zM370 466h1v1h-1zM405 466h1v1h-1zM440 466h1v1h-1zM475 466h1v1h-1zM510 466h1v1h-1zM545 466h1v1h-1zM580 466h1v1h-1zM615 466h1v1h-1zM650 466h1v1h-1zM685 466h1v1h-1zM720 466h1v1h-1zM755 466h1v1h-1zM790 466h1v1h-1zM825 466h1v1h-1zM860 466h1v1h-1zM895 466h1v1h-1zM930 466h1v1h-1zM964 466h1v1h-1zM999 466h1v1h-1zM1034 466h1v1h-1zM1069 466h1v1h-1zM1104 466h1v1h-1zM1139 466h1v1h-1zM1174 466h1v1h-1zM1209 466h1v1h-1zM1244 466h1v1h-1zM1279 466h1v1h-1zM1314 466h1v1h-1zM1349 466h1v1h-1zM1384 466h1v1h-1zM1419 466h1v1h-1zM1454 466h1v1h-1zM1489 466h1v1h-1zM1524 466h1v1h-1zM1559 466h1v1h-1zM1594 466h1v1h-1zM1629 466h1v1h-1zM1664 466h1v1h-1zM1699 466h1v1h-1zM1734 466h1v1h-1zM20 455h1v1h-1zM55 455h1v1h-1zM90 455h1v1h-1zM125 455h1v1h-1zM160 455h1v1h-1zM195 455h1v1h-1zM230 455h1v1h-1zM265 455h1v1h-1zM300 455h1v1h-1zM335 455h1v1h-1zM370 455h1v1h-1zM405 455h1v1h-1zM440 455h1v1h-1zM475 455h1v1h-1zM510 455h1v1h-1zM545 455h1v1h-1zM580 455h1v1h-1zM615 455h1v1h-1zM650 455h1v1h-1zM685 455h1v1h-1zM720 455h1v1h-1zM755 455h1v1h-1zM790 455h1v1h-1zM825 455h1v1h-1zM860 455h1v1h-1zM895 455h1v1h-1zM930 455h1v1h-1zM964 455h1v1h-1zM999 455h1v1h-1zM1034 455h1v1h-1zM1069 455h1v1h-1zM1104 455h1v1h-1zM1139 455h1v1h-1zM1174 455h1v1h-1zM1209 455h1v1h-1zM1244 455h1v1h-1zM1279 455h1v1h-1zM1314 455h1v1h-1zM1349 455h1v1h-1zM1384 455h1v1h-1zM1419 455h1v1h-1zM1454 455h1v1h-1zM1489 455h1v1h-1zM1524 455h1v1h-1zM1559 455h1v1h-1zM1594 455h1v1h-1zM1629 455h1v1h-1zM1664 455h1v1h-1zM1699 455h1v1h-1zM1734 455h1v1h-1zM20 443h1v1h-1zM55 443h1v1h-1zM90 443h1v1h-1zM125 443h1v1h-1zM160 443h1v1h-1zM195 443h1v1h-1zM230 443h1v1h-1zM265 443h1v1h-1zM300 443h1v1h-1zM335 443h1v1h-1zM370 443h1v1h-1zM405 443h1v1h-1zM440 443h1v1h-1zM475 443h1v1h-1zM510 443h1v1h-1zM545 443h1v1h-1zM580 443h1v1h-1zM615 443h1v1h-1zM650 443h1v1h-1zM685 443h1v1h-1zM720 443h1v1h-1zM755 443h1v1h-1zM790 443h1v1h-1zM825 443h1v1h-1zM860 443h1v1h-1zM895 443h1v1h-1zM930 443h1v1h-1zM964 443h1v1h-1zM999 443h1v1h-1zM1034 443h1v1h-1zM1069 443h1v1h-1zM1104 443h1v1h-1zM1139 443h1v1h-1zM1174 443h1v1h-1zM1209 443h1v1h-1zM1244 443h1v1h-1zM1279 443h1v1h-1zM1314 443h1v1h-1zM1349 443h1v1h-1zM1384 443h1v1h-1zM1419 443h1v1h-1zM1454 443h1v1h-1zM1489 443h1v1h-1zM1524 443h1v1h-1zM1559 443h1v1h-1zM1594 443h1v1h-1zM1629 443h1v1h-1zM1664 443h1v1h-1zM1699 443h1v1h-1zM1734 443h1v1h-1zM20 431h1v1h-1zM55 431h1v1h-1zM90 431h1v1h-1zM125 431h1v1h-1zM160 431h1v1h-1zM195 431h1v1h-1zM230 431h1v1h-1zM265 431h1v1h-1zM300 431h1v1h-1zM335 431h1v1h-1zM370 431h1v1h-1zM405 431h1v1h-1zM440 431h1v1h-1zM475 431h1v1h-1zM510 431h1v1h-1zM545 431h1v1h-1zM580 431h1v1h-1zM615 431h1v1h-1zM650 431h1v1h-1zM685 431h1v1h-1zM720 431h1v1h-1zM755 431h1v1h-1zM790 431h1v1h-1zM825 431h1v1h-1zM860 431h1v1h-1zM895 431h1v1h-1zM930 431h1v1h-1zM964 431h1v1h-1zM999 431h1v1h-1zM1034 431h1v1h-1zM1069 431h1v1h-1zM1104 431h1v1h-1zM1139 431h1v1h-1zM1174 431h1v1h-1zM1209 431h1v1h-1zM1244 431h1v1h-1zM1279 431h1v1h-1zM1314 431h1v1h-1zM1349 431h1v1h-1zM1384 431h1v1h-1zM1419 431h1v1h-1zM1454 431h1v1h-1zM1489 431h1v1h-1zM1524 431h1v1h-1zM1559 431h1v1h-1zM1594 431h1v1h-1zM1629 431h1v1h-1zM1664 431h1v1h-1zM1699 431h1v1h-1zM1734 431h1v1h-1zM20 420h1v1h-1zM55 420h1v1h-1zM90 420h1v1h-1zM125 420h1v1h-1zM160 420h1v1h-1zM195 420h1v1h-1zM230 420h1v1h-1zM265 420h1v1h-1zM300 420h1v1h-1zM335 420h1v1h-1zM370 420h1v1h-1zM405 420h1v1h-1zM440 420h1v1h-1zM475 420h1v1h-1zM510 420h1v1h-1zM545 420h1v1h-1zM580 420h1v1h-1zM615 420h1v1h-1zM650 420h1v1h-1zM685 420h1v1h-1zM720 420h1v1h-1zM755 420h1v1h-1zM790 420h1v1h-1zM825 420h1v1h-1zM860 420h1v1h-1zM895 420h1v1h-1zM930 420h1v1h-1zM964 420h1v1h-1zM999 420h1v1h-1zM1034 420h1v1h-1zM1069 420h1v1h-1zM1104 420h1v1h-1zM1139 420h1v1h-1zM1174 420h1v1h-1zM1209 420h1v1h-1zM1244 420h1v1h-1zM1279 420h1v1h-1zM1314 420h1v1h-1zM1349 420h1v1h-1zM1384 420h1v1h-1zM1419 420h1v1h-1zM1454 420h1v1h-1zM1489 420h1v1h-1zM1524 420h1v1h-1zM1559 420h1v1h-1zM1594 420h1v1h-1zM1629 420h1v1h-1zM1664 420h1v1h-1zM1699 420h1v1h-1zM1734 420h1v1h-1zM20 489h1v1h-1zM55 489h1v1h-1zM90 489h1v1h-1zM125 489h1v1h-1zM160 489h1v1h-1zM195 489h1v1h-1zM230 489h1v1h-1zM265 489h1v1h-1zM300 489h1v1h-1zM335 489h1v1h-1zM370 489h1v1h-1zM405 489h1v1h-1zM440 489h1v1h-1zM475 489h1v1h-1zM510 489h1v1h-1zM545 489h1v1h-1zM580 489h1v1h-1zM615 489h1v1h-1zM650 489h1v1h-1zM685 489h1v1h-1zM720 489h1v1h-1zM755 489h1v1h-1zM790 489h1v1h-1zM825 489h1v1h-1zM860 489h1v1h-1zM895 489h1v1h-1zM930 489h1v1h-1zM964 489h1v1h-1zM999 489h1v1h-1zM1034 489h1v1h-1zM1069 489h1v1h-1zM1104 489h1v1h-1zM1139 489h1v1h-1zM1174 489h1v1h-1zM1209 489h1v1h-1zM1244 489h1v1h-1zM1279 489h1v1h-1zM1314 489h1v1h-1zM1349 489h1v1h-1zM1384 489h1v1h-1zM1419 489h1v1h-1zM1454 489h1v1h-1zM1489 489h1v1h-1zM1524 489h1v1h-1zM1559 489h1v1h-1zM1594 489h1v1h-1zM1629 489h1v1h-1zM1664 489h1v1h-1zM1699 489h1v1h-1zM1734 489h1v1h-1zM20 501h1v1h-1zM55 501h1v1h-1zM90 501h1v1h-1zM125 501h1v1h-1zM160 501h1v1h-1zM195 501h1v1h-1zM230 501h1v1h-1zM265 501h1v1h-1zM300 501h1v1h-1zM335 501h1v1h-1zM370 501h1v1h-1zM405 501h1v1h-1zM440 501h1v1h-1zM475 501h1v1h-1zM510 501h1v1h-1zM545 501h1v1h-1zM580 501h1v1h-1zM615 501h1v1h-1zM650 501h1v1h-1zM685 501h1v1h-1zM720 501h1v1h-1zM755 501h1v1h-1zM790 501h1v1h-1zM825 501h1v1h-1zM860 501h1v1h-1zM895 501h1v1h-1zM930 501h1v1h-1zM964 501h1v1h-1zM999 501h1v1h-1zM1034 501h1v1h-1zM1069 501h1v1h-1zM1104 501h1v1h-1zM1139 501h1v1h-1zM1174 501h1v1h-1zM1209 501h1v1h-1zM1244 501h1v1h-1zM1279 501h1v1h-1zM1314 501h1v1h-1zM1349 501h1v1h-1zM1384 501h1v1h-1zM1419 501h1v1h-1zM1454 501h1v1h-1zM1489 501h1v1h-1zM1524 501h1v1h-1zM1559 501h1v1h-1zM1594 501h1v1h-1zM1629 501h1v1h-1zM1664 501h1v1h-1zM1699 501h1v1h-1zM1734 501h1v1h-1zM20 512h1v1h-1zM55 512h1v1h-1zM90 512h1v1h-1zM125 512h1v1h-1zM160 512h1v1h-1zM195 512h1v1h-1zM230 512h1v1h-1zM265 512h1v1h-1zM300 512h1v1h-1zM335 512h1v1h-1zM370 512h1v1h-1zM405 512h1v1h-1zM440 512h1v1h-1zM475 512h1v1h-1zM510 512h1v1h-1zM545 512h1v1h-1zM580 512h1v1h-1zM615 512h1v1h-1zM650 512h1v1h-1zM685 512h1v1h-1zM720 512h1v1h-1zM755 512h1v1h-1zM790 512h1v1h-1zM825 512h1v1h-1zM860 512h1v1h-1zM895 512h1v1h-1zM930 512h1v1h-1zM964 512h1v1h-1zM999 512h1v1h-1zM1034 512h1v1h-1zM1069 512h1v1h-1zM1104 512h1v1h-1zM1139 512h1v1h-1zM1174 512h1v1h-1zM1209 512h1v1h-1zM1244 512h1v1h-1zM1279 512h1v1h-1zM1314 512h1v1h-1zM1349 512h1v1h-1zM1384 512h1v1h-1zM1419 512h1v1h-1zM1454 512h1v1h-1zM1489 512h1v1h-1zM1524 512h1v1h-1zM1559 512h1v1h-1zM1594 512h1v1h-1zM1629 512h1v1h-1zM1664 512h1v1h-1zM1699 512h1v1h-1zM1734 512h1v1h-1zM20 524h1v1h-1zM55 524h1v1h-1zM90 524h1v1h-1zM125 524h1v1h-1zM160 524h1v1h-1zM195 524h1v1h-1zM230 524h1v1h-1zM265 524h1v1h-1zM300 524h1v1h-1zM335 524h1v1h-1zM370 524h1v1h-1zM405 524h1v1h-1zM440 524h1v1h-1zM475 524h1v1h-1zM510 524h1v1h-1zM545 524h1v1h-1zM580 524h1v1h-1zM615 524h1v1h-1zM650 524h1v1h-1zM685 524h1v1h-1zM720 524h1v1h-1zM755 524h1v1h-1zM790 524h1v1h-1zM825 524h1v1h-1zM860 524h1v1h-1zM895 524h1v1h-1zM930 524h1v1h-1zM964 524h1v1h-1zM999 524h1v1h-1zM1034 524h1v1h-1zM1069 524h1v1h-1zM1104 524h1v1h-1zM1139 524h1v1h-1zM1174 524h1v1h-1zM1209 524h1v1h-1zM1244 524h1v1h-1zM1279 524h1v1h-1zM1314 524h1v1h-1zM1349 524h1v1h-1zM1384 524h1v1h-1zM1419 524h1v1h-1zM1454 524h1v1h-1zM1489 524h1v1h-1zM1524 524h1v1h-1zM1559 524h1v1h-1zM1594 524h1v1h-1zM1629 524h1v1h-1zM1664 524h1v1h-1zM1699 524h1v1h-1zM1734 524h1v1h-1zM20 572h1v1h-1zM55 572h1v1h-1zM90 572h1v1h-1zM125 572h1v1h-1zM160 572h1v1h-1zM195 572h1v1h-1zM230 572h1v1h-1zM265 572h1v1h-1zM300 572h1v1h-1zM335 572h1v1h-1zM370 572h1v1h-1zM405 572h1v1h-1zM440 572h1v1h-1zM475 572h1v1h-1zM510 572h1v1h-1zM545 572h1v1h-1zM580 572h1v1h-1zM615 572h1v1h-1zM650 572h1v1h-1zM685 572h1v1h-1zM720 572h1v1h-1zM755 572h1v1h-1zM790 572h1v1h-1zM825 572h1v1h-1zM860 572h1v1h-1zM895 572h1v1h-1zM930 572h1v1h-1zM964 572h1v1h-1zM999 572h1v1h-1zM1034 572h1v1h-1zM1069 572h1v1h-1zM1104 572h1v1h-1zM1139 572h1v1h-1zM1174 572h1v1h-1zM1209 572h1v1h-1zM1244 572h1v1h-1zM1279 572h1v1h-1zM1314 572h1v1h-1zM1349 572h1v1h-1zM1384 572h1v1h-1zM1419 572h1v1h-1zM1454 572h1v1h-1zM1489 572h1v1h-1zM1524 572h1v1h-1zM1559 572h1v1h-1zM1594 572h1v1h-1zM1629 572h1v1h-1zM1664 572h1v1h-1zM1699 572h1v1h-1zM1734 572h1v1h-1zM20 560h1v1h-1zM55 560h1v1h-1zM90 560h1v1h-1zM125 560h1v1h-1zM160 560h1v1h-1zM195 560h1v1h-1zM230 560h1v1h-1zM265 560h1v1h-1zM300 560h1v1h-1zM335 560h1v1h-1zM370 560h1v1h-1zM405 560h1v1h-1zM440 560h1v1h-1zM475 560h1v1h-1zM510 560h1v1h-1zM545 560h1v1h-1zM580 560h1v1h-1zM615 560h1v1h-1zM650 560h1v1h-1zM685 560h1v1h-1zM720 560h1v1h-1zM755 560h1v1h-1zM790 560h1v1h-1zM825 560h1v1h-1zM860 560h1v1h-1zM895 560h1v1h-1zM930 560h1v1h-1zM964 560h1v1h-1zM999 560h1v1h-1zM1034 560h1v1h-1zM1069 560h1v1h-1zM1104 560h1v1h-1zM1139 560h1v1h-1zM1174 560h1v1h-1zM1209 560h1v1h-1zM1244 560h1v1h-1zM1279 560h1v1h-1zM1314 560h1v1h-1zM1349 560h1v1h-1zM1384 560h1v1h-1zM1419 560h1v1h-1zM1454 560h1v1h-1zM1489 560h1v1h-1zM1524 560h1v1h-1zM1559 560h1v1h-1zM1594 560h1v1h-1zM1629 560h1v1h-1zM1664 560h1v1h-1zM1699 560h1v1h-1zM1734 560h1v1h-1zM20 549h1v1h-1zM55 549h1v1h-1zM90 549h1v1h-1zM125 549h1v1h-1zM160 549h1v1h-1zM195 549h1v1h-1zM230 549h1v1h-1zM265 549h1v1h-1zM300 549h1v1h-1zM335 549h1v1h-1zM370 549h1v1h-1zM405 549h1v1h-1zM440 549h1v1h-1zM475 549h1v1h-1zM510 549h1v1h-1zM545 549h1v1h-1zM580 549h1v1h-1zM615 549h1v1h-1zM650 549h1v1h-1zM685 549h1v1h-1zM720 549h1v1h-1zM755 549h1v1h-1zM790 549h1v1h-1zM825 549h1v1h-1zM860 549h1v1h-1zM895 549h1v1h-1zM930 549h1v1h-1zM964 549h1v1h-1zM999 549h1v1h-1zM1034 549h1v1h-1zM1069 549h1v1h-1zM1104 549h1v1h-1zM1139 549h1v1h-1zM1174 549h1v1h-1zM1209 549h1v1h-1zM1244 549h1v1h-1zM1279 549h1v1h-1zM1314 549h1v1h-1zM1349 549h1v1h-1zM1384 549h1v1h-1zM1419 549h1v1h-1zM1454 549h1v1h-1zM1489 549h1v1h-1zM1524 549h1v1h-1zM1559 549h1v1h-1zM1594 549h1v1h-1zM1629 549h1v1h-1zM1664 549h1v1h-1zM1699 549h1v1h-1zM1734 549h1v1h-1zM20 537h1v1h-1zM55 537h1v1h-1zM90 537h1v1h-1zM125 537h1v1h-1zM160 537h1v1h-1zM195 537h1v1h-1zM230 537h1v1h-1zM265 537h1v1h-1zM300 537h1v1h-1zM335 537h1v1h-1zM370 537h1v1h-1zM405 537h1v1h-1zM440 537h1v1h-1zM475 537h1v1h-1zM510 537h1v1h-1zM545 537h1v1h-1zM580 537h1v1h-1zM615 537h1v1h-1zM650 537h1v1h-1zM685 537h1v1h-1zM720 537h1v1h-1zM755 537h1v1h-1zM790 537h1v1h-1zM825 537h1v1h-1zM860 537h1v1h-1zM895 537h1v1h-1zM930 537h1v1h-1zM964 537h1v1h-1zM999 537h1v1h-1zM1034 537h1v1h-1zM1069 537h1v1h-1zM1104 537h1v1h-1zM1139 537h1v1h-1zM1174 537h1v1h-1zM1209 537h1v1h-1zM1244 537h1v1h-1zM1279 537h1v1h-1zM1314 537h1v1h-1zM1349 537h1v1h-1zM1384 537h1v1h-1zM1419 537h1v1h-1zM1454 537h1v1h-1zM1489 537h1v1h-1zM1524 537h1v1h-1zM1559 537h1v1h-1zM1594 537h1v1h-1zM1629 537h1v1h-1zM1664 537h1v1h-1zM1699 537h1v1h-1zM1734 537h1v1h-1zM20 595h1v1h-1zM55 595h1v1h-1zM90 595h1v1h-1zM125 595h1v1h-1zM160 595h1v1h-1zM195 595h1v1h-1zM230 595h1v1h-1zM265 595h1v1h-1zM300 595h1v1h-1zM335 595h1v1h-1zM370 595h1v1h-1zM405 595h1v1h-1zM440 595h1v1h-1zM475 595h1v1h-1zM510 595h1v1h-1zM545 595h1v1h-1zM580 595h1v1h-1zM615 595h1v1h-1zM650 595h1v1h-1zM685 595h1v1h-1zM720 595h1v1h-1zM755 595h1v1h-1zM790 595h1v1h-1zM825 595h1v1h-1zM860 595h1v1h-1zM895 595h1v1h-1zM930 595h1v1h-1zM964 595h1v1h-1zM999 595h1v1h-1zM1034 595h1v1h-1zM1069 595h1v1h-1zM1104 595h1v1h-1zM1139 595h1v1h-1zM1174 595h1v1h-1zM1209 595h1v1h-1zM1244 595h1v1h-1zM1279 595h1v1h-1zM1314 595h1v1h-1zM1349 595h1v1h-1zM1384 595h1v1h-1zM1419 595h1v1h-1zM1454 595h1v1h-1zM1489 595h1v1h-1zM1524 595h1v1h-1zM1559 595h1v1h-1zM1594 595h1v1h-1zM1629 595h1v1h-1zM1664 595h1v1h-1zM1699 595h1v1h-1zM1734 595h1v1h-1zM20 606h1v1h-1zM55 606h1v1h-1zM90 606h1v1h-1zM125 606h1v1h-1zM160 606h1v1h-1zM195 606h1v1h-1zM230 606h1v1h-1zM265 606h1v1h-1zM300 606h1v1h-1zM335 606h1v1h-1zM370 606h1v1h-1zM405 606h1v1h-1zM440 606h1v1h-1zM475 606h1v1h-1zM510 606h1v1h-1zM545 606h1v1h-1zM580 606h1v1h-1zM615 606h1v1h-1zM650 606h1v1h-1zM685 606h1v1h-1zM720 606h1v1h-1zM755 606h1v1h-1zM790 606h1v1h-1zM825 606h1v1h-1zM860 606h1v1h-1zM895 606h1v1h-1zM930 606h1v1h-1zM964 606h1v1h-1zM999 606h1v1h-1zM1034 606h1v1h-1zM1069 606h1v1h-1zM1104 606h1v1h-1zM1139 606h1v1h-1zM1174 606h1v1h-1zM1209 606h1v1h-1zM1244 606h1v1h-1zM1279 606h1v1h-1zM1314 606h1v1h-1zM1349 606h1v1h-1zM1384 606h1v1h-1zM1419 606h1v1h-1zM1454 606h1v1h-1zM1489 606h1v1h-1zM1524 606h1v1h-1zM1559 606h1v1h-1zM1594 606h1v1h-1zM1629 606h1v1h-1zM1664 606h1v1h-1zM1699 606h1v1h-1zM1734 606h1v1h-1zM20 618h1v1h-1zM55 618h1v1h-1zM90 618h1v1h-1zM125 618h1v1h-1zM160 618h1v1h-1zM195 618h1v1h-1zM230 618h1v1h-1zM265 618h1v1h-1zM300 618h1v1h-1zM335 618h1v1h-1zM370 618h1v1h-1zM405 618h1v1h-1zM440 618h1v1h-1zM475 618h1v1h-1zM510 618h1v1h-1zM545 618h1v1h-1zM580 618h1v1h-1zM615 618h1v1h-1zM650 618h1v1h-1zM685 618h1v1h-1zM720 618h1v1h-1zM755 618h1v1h-1zM790 618h1v1h-1zM825 618h1v1h-1zM860 618h1v1h-1zM895 618h1v1h-1zM930 618h1v1h-1zM964 618h1v1h-1zM999 618h1v1h-1zM1034 618h1v1h-1zM1069 618h1v1h-1zM1104 618h1v1h-1zM1139 618h1v1h-1zM1174 618h1v1h-1zM1209 618h1v1h-1zM1244 618h1v1h-1zM1279 618h1v1h-1zM1314 618h1v1h-1zM1349 618h1v1h-1zM1384 618h1v1h-1zM1419 618h1v1h-1zM1454 618h1v1h-1zM1489 618h1v1h-1zM1524 618h1v1h-1zM1559 618h1v1h-1zM1594 618h1v1h-1zM1629 618h1v1h-1zM1664 618h1v1h-1zM1699 618h1v1h-1zM1734 618h1v1h-1zM20 629h1v1h-1zM55 629h1v1h-1zM90 629h1v1h-1zM125 629h1v1h-1zM160 629h1v1h-1zM195 629h1v1h-1zM230 629h1v1h-1zM265 629h1v1h-1zM300 629h1v1h-1zM335 629h1v1h-1zM370 629h1v1h-1zM405 629h1v1h-1zM440 629h1v1h-1zM475 629h1v1h-1zM510 629h1v1h-1zM545 629h1v1h-1zM580 629h1v1h-1zM615 629h1v1h-1zM650 629h1v1h-1zM685 629h1v1h-1zM720 629h1v1h-1zM755 629h1v1h-1zM790 629h1v1h-1zM825 629h1v1h-1zM860 629h1v1h-1zM895 629h1v1h-1zM930 629h1v1h-1zM964 629h1v1h-1zM999 629h1v1h-1zM1034 629h1v1h-1zM1069 629h1v1h-1zM1104 629h1v1h-1zM1139 629h1v1h-1zM1174 629h1v1h-1zM1209 629h1v1h-1zM1244 629h1v1h-1zM1279 629h1v1h-1zM1314 629h1v1h-1zM1349 629h1v1h-1zM1384 629h1v1h-1zM1419 629h1v1h-1zM1454 629h1v1h-1zM1489 629h1v1h-1zM1524 629h1v1h-1zM1559 629h1v1h-1zM1594 629h1v1h-1zM1629 629h1v1h-1zM1664 629h1v1h-1zM1699 629h1v1h-1zM1734 629h1v1h-1zM20 641h1v1h-1zM55 641h1v1h-1zM90 641h1v1h-1zM125 641h1v1h-1zM160 641h1v1h-1zM195 641h1v1h-1zM230 641h1v1h-1zM265 641h1v1h-1zM300 641h1v1h-1zM335 641h1v1h-1zM370 641h1v1h-1zM405 641h1v1h-1zM440 641h1v1h-1zM475 641h1v1h-1zM510 641h1v1h-1zM545 641h1v1h-1zM580 641h1v1h-1zM615 641h1v1h-1zM650 641h1v1h-1zM685 641h1v1h-1zM720 641h1v1h-1zM755 641h1v1h-1zM790 641h1v1h-1zM825 641h1v1h-1zM860 641h1v1h-1zM895 641h1v1h-1zM930 641h1v1h-1zM964 641h1v1h-1zM999 641h1v1h-1zM1034 641h1v1h-1zM1069 641h1v1h-1zM1104 641h1v1h-1zM1139 641h1v1h-1zM1174 641h1v1h-1zM1209 641h1v1h-1zM1244 641h1v1h-1zM1279 641h1v1h-1zM1314 641h1v1h-1zM1349 641h1v1h-1zM1384 641h1v1h-1zM1419 641h1v1h-1zM1454 641h1v1h-1zM1489 641h1v1h-1zM1524 641h1v1h-1zM1559 641h1v1h-1zM1594 641h1v1h-1zM1629 641h1v1h-1zM1664 641h1v1h-1zM1699 641h1v1h-1zM1734 641h1v1h-1zM20 735h1v1h-1zM55 735h1v1h-1zM90 735h1v1h-1zM125 735h1v1h-1zM160 735h1v1h-1zM195 735h1v1h-1zM230 735h1v1h-1zM265 735h1v1h-1zM300 735h1v1h-1zM335 735h1v1h-1zM370 735h1v1h-1zM405 735h1v1h-1zM440 735h1v1h-1zM475 735h1v1h-1zM510 735h1v1h-1zM545 735h1v1h-1zM580 735h1v1h-1zM615 735h1v1h-1zM650 735h1v1h-1zM685 735h1v1h-1zM720 735h1v1h-1zM755 735h1v1h-1zM790 735h1v1h-1zM825 735h1v1h-1zM860 735h1v1h-1zM895 735h1v1h-1zM930 735h1v1h-1zM964 735h1v1h-1zM999 735h1v1h-1zM1034 735h1v1h-1zM1069 735h1v1h-1zM1104 735h1v1h-1zM1139 735h1v1h-1zM1174 735h1v1h-1zM1209 735h1v1h-1zM1244 735h1v1h-1zM1279 735h1v1h-1zM1314 735h1v1h-1zM1349 735h1v1h-1zM1384 735h1v1h-1zM1419 735h1v1h-1zM1454 735h1v1h-1zM1489 735h1v1h-1zM1524 735h1v1h-1zM1559 735h1v1h-1zM1594 735h1v1h-1zM1629 735h1v1h-1zM1664 735h1v1h-1zM1699 735h1v1h-1zM1734 735h1v1h-1zM20 724h1v1h-1zM55 724h1v1h-1zM90 724h1v1h-1zM125 724h1v1h-1zM160 724h1v1h-1zM195 724h1v1h-1zM230 724h1v1h-1zM265 724h1v1h-1zM300 724h1v1h-1zM335 724h1v1h-1zM370 724h1v1h-1zM405 724h1v1h-1zM440 724h1v1h-1zM475 724h1v1h-1zM510 724h1v1h-1zM545 724h1v1h-1zM580 724h1v1h-1zM615 724h1v1h-1zM650 724h1v1h-1zM685 724h1v1h-1zM720 724h1v1h-1zM755 724h1v1h-1zM790 724h1v1h-1zM825 724h1v1h-1zM860 724h1v1h-1zM895 724h1v1h-1zM930 724h1v1h-1zM964 724h1v1h-1zM999 724h1v1h-1zM1034 724h1v1h-1zM1069 724h1v1h-1zM1104 724h1v1h-1zM1139 724h1v1h-1zM1174 724h1v1h-1zM1209 724h1v1h-1zM1244 724h1v1h-1zM1279 724h1v1h-1zM1314 724h1v1h-1zM1349 724h1v1h-1zM1384 724h1v1h-1zM1419 724h1v1h-1zM1454 724h1v1h-1zM1489 724h1v1h-1zM1524 724h1v1h-1zM1559 724h1v1h-1zM1594 724h1v1h-1zM1629 724h1v1h-1zM1664 724h1v1h-1zM1699 724h1v1h-1zM1734 724h1v1h-1zM20 712h1v1h-1zM55 712h1v1h-1zM90 712h1v1h-1zM125 712h1v1h-1zM160 712h1v1h-1zM195 712h1v1h-1zM230 712h1v1h-1zM265 712h1v1h-1zM300 712h1v1h-1zM335 712h1v1h-1zM370 712h1v1h-1zM405 712h1v1h-1zM440 712h1v1h-1zM475 712h1v1h-1zM510 712h1v1h-1zM545 712h1v1h-1zM580 712h1v1h-1zM615 712h1v1h-1zM650 712h1v1h-1zM685 712h1v1h-1zM720 712h1v1h-1zM755 712h1v1h-1zM790 712h1v1h-1zM825 712h1v1h-1zM860 712h1v1h-1zM895 712h1v1h-1zM930 712h1v1h-1zM964 712h1v1h-1zM999 712h1v1h-1zM1034 712h1v1h-1zM1069 712h1v1h-1zM1104 712h1v1h-1zM1139 712h1v1h-1zM1174 712h1v1h-1zM1209 712h1v1h-1zM1244 712h1v1h-1zM1279 712h1v1h-1zM1314 712h1v1h-1zM1349 712h1v1h-1zM1384 712h1v1h-1zM1419 712h1v1h-1zM1454 712h1v1h-1zM1489 712h1v1h-1zM1524 712h1v1h-1zM1559 712h1v1h-1zM1594 712h1v1h-1zM1629 712h1v1h-1zM1664 712h1v1h-1zM1699 712h1v1h-1zM1734 712h1v1h-1zM20 701h1v1h-1zM55 701h1v1h-1zM90 701h1v1h-1zM125 701h1v1h-1zM160 701h1v1h-1zM195 701h1v1h-1zM230 701h1v1h-1zM265 701h1v1h-1zM300 701h1v1h-1zM335 701h1v1h-1zM370 701h1v1h-1zM405 701h1v1h-1zM440 701h1v1h-1zM475 701h1v1h-1zM510 701h1v1h-1zM545 701h1v1h-1zM580 701h1v1h-1zM615 701h1v1h-1zM650 701h1v1h-1zM685 701h1v1h-1zM720 701h1v1h-1zM755 701h1v1h-1zM790 701h1v1h-1zM825 701h1v1h-1zM860 701h1v1h-1zM895 701h1v1h-1zM930 701h1v1h-1zM964 701h1v1h-1zM999 701h1v1h-1zM1034 701h1v1h-1zM1069 701h1v1h-1zM1104 701h1v1h-1zM1139 701h1v1h-1zM1174 701h1v1h-1zM1209 701h1v1h-1zM1244 701h1v1h-1zM1279 701h1v1h-1zM1314 701h1v1h-1zM1349 701h1v1h-1zM1384 701h1v1h-1zM1419 701h1v1h-1zM1454 701h1v1h-1zM1489 701h1v1h-1zM1524 701h1v1h-1zM1559 701h1v1h-1zM1594 701h1v1h-1zM1629 701h1v1h-1zM1664 701h1v1h-1zM1699 701h1v1h-1zM1734 701h1v1h-1zM20 689h1v1h-1zM55 689h1v1h-1zM90 689h1v1h-1zM125 689h1v1h-1zM160 689h1v1h-1zM195 689h1v1h-1zM230 689h1v1h-1zM265 689h1v1h-1zM300 689h1v1h-1zM335 689h1v1h-1zM370 689h1v1h-1zM405 689h1v1h-1zM440 689h1v1h-1zM475 689h1v1h-1zM510 689h1v1h-1zM545 689h1v1h-1zM580 689h1v1h-1zM615 689h1v1h-1zM650 689h1v1h-1zM685 689h1v1h-1zM720 689h1v1h-1zM755 689h1v1h-1zM790 689h1v1h-1zM825 689h1v1h-1zM860 689h1v1h-1zM895 689h1v1h-1zM930 689h1v1h-1zM964 689h1v1h-1zM999 689h1v1h-1zM1034 689h1v1h-1zM1069 689h1v1h-1zM1104 689h1v1h-1zM1139 689h1v1h-1zM1174 689h1v1h-1zM1209 689h1v1h-1zM1244 689h1v1h-1zM1279 689h1v1h-1zM1314 689h1v1h-1zM1349 689h1v1h-1zM1384 689h1v1h-1zM1419 689h1v1h-1zM1454 689h1v1h-1zM1489 689h1v1h-1zM1524 689h1v1h-1zM1559 689h1v1h-1zM1594 689h1v1h-1zM1629 689h1v1h-1zM1664 689h1v1h-1zM1699 689h1v1h-1zM1734 689h1v1h-1zM20 678h1v1h-1zM55 678h1v1h-1zM90 678h1v1h-1zM125 678h1v1h-1zM160 678h1v1h-1zM195 678h1v1h-1zM230 678h1v1h-1zM265 678h1v1h-1zM300 678h1v1h-1zM335 678h1v1h-1zM370 678h1v1h-1zM405 678h1v1h-1zM440 678h1v1h-1zM475 678h1v1h-1zM510 678h1v1h-1zM545 678h1v1h-1zM580 678h1v1h-1zM615 678h1v1h-1zM650 678h1v1h-1zM685 678h1v1h-1zM720 678h1v1h-1zM755 678h1v1h-1zM790 678h1v1h-1zM825 678h1v1h-1zM860 678h1v1h-1zM895 678h1v1h-1zM930 678h1v1h-1zM964 678h1v1h-1zM999 678h1v1h-1zM1034 678h1v1h-1zM1069 678h1v1h-1zM1104 678h1v1h-1zM1139 678h1v1h-1zM1174 678h1v1h-1zM1209 678h1v1h-1zM1244 678h1v1h-1zM1279 678h1v1h-1zM1314 678h1v1h-1zM1349 678h1v1h-1zM1384 678h1v1h-1zM1419 678h1v1h-1zM1454 678h1v1h-1zM1489 678h1v1h-1zM1524 678h1v1h-1zM1559 678h1v1h-1zM1594 678h1v1h-1zM1629 678h1v1h-1zM1664 678h1v1h-1zM1699 678h1v1h-1zM1734 678h1v1h-1zM20 666h1v1h-1zM55 666h1v1h-1zM90 666h1v1h-1zM125 666h1v1h-1zM160 666h1v1h-1zM195 666h1v1h-1zM230 666h1v1h-1zM265 666h1v1h-1zM300 666h1v1h-1zM335 666h1v1h-1zM370 666h1v1h-1zM405 666h1v1h-1zM440 666h1v1h-1zM475 666h1v1h-1zM510 666h1v1h-1zM545 666h1v1h-1zM580 666h1v1h-1zM615 666h1v1h-1zM650 666h1v1h-1zM685 666h1v1h-1zM720 666h1v1h-1zM755 666h1v1h-1zM790 666h1v1h-1zM825 666h1v1h-1zM860 666h1v1h-1zM895 666h1v1h-1zM930 666h1v1h-1zM964 666h1v1h-1zM999 666h1v1h-1zM1034 666h1v1h-1zM1069 666h1v1h-1zM1104 666h1v1h-1zM1139 666h1v1h-1zM1174 666h1v1h-1zM1209 666h1v1h-1zM1244 666h1v1h-1zM1279 666h1v1h-1zM1314 666h1v1h-1zM1349 666h1v1h-1zM1384 666h1v1h-1zM1419 666h1v1h-1zM1454 666h1v1h-1zM1489 666h1v1h-1zM1524 666h1v1h-1zM1559 666h1v1h-1zM1594 666h1v1h-1zM1629 666h1v1h-1zM1664 666h1v1h-1zM1699 666h1v1h-1zM1734 666h1v1h-1zM20 655h1v1h-1zM55 655h1v1h-1zM90 655h1v1h-1zM125 655h1v1h-1zM160 655h1v1h-1zM195 655h1v1h-1zM230 655h1v1h-1zM265 655h1v1h-1zM300 655h1v1h-1zM335 655h1v1h-1zM370 655h1v1h-1zM405 655h1v1h-1zM440 655h1v1h-1zM475 655h1v1h-1zM510 655h1v1h-1zM545 655h1v1h-1zM580 655h1v1h-1zM615 655h1v1h-1zM650 655h1v1h-1zM685 655h1v1h-1zM720 655h1v1h-1zM755 655h1v1h-1zM790 655h1v1h-1zM825 655h1v1h-1zM860 655h1v1h-1zM895 655h1v1h-1zM930 655h1v1h-1zM964 655h1v1h-1zM999 655h1v1h-1zM1034 655h1v1h-1zM1069 655h1v1h-1zM1104 655h1v1h-1zM1139 655h1v1h-1zM1174 655h1v1h-1zM1209 655h1v1h-1zM1244 655h1v1h-1zM1279 655h1v1h-1zM1314 655h1v1h-1zM1349 655h1v1h-1zM1384 655h1v1h-1zM1419 655h1v1h-1zM1454 655h1v1h-1zM1489 655h1v1h-1zM1524 655h1v1h-1zM1559 655h1v1h-1zM1594 655h1v1h-1zM1629 655h1v1h-1zM1664 655h1v1h-1zM1699 655h1v1h-1zM1734 655h1v1h-1zM20 643h1v1h-1zM55 643h1v1h-1zM90 643h1v1h-1zM125 643h1v1h-1zM160 643h1v1h-1zM195 643h1v1h-1zM230 643h1v1h-1zM265 643h1v1h-1zM300 643h1v1h-1zM335 643h1v1h-1zM370 643h1v1h-1zM405 643h1v1h-1zM440 643h1v1h-1zM475 643h1v1h-1zM510 643h1v1h-1zM545 643h1v1h-1zM580 643h1v1h-1zM615 643h1v1h-1zM650 643h1v1h-1zM685 643h1v1h-1zM720 643h1v1h-1zM755 643h1v1h-1zM790 643h1v1h-1zM825 643h1v1h-1zM860 643h1v1h-1zM895 643h1v1h-1zM930 643h1v1h-1zM964 643h1v1h-1zM999 643h1v1h-1zM1034 643h1v1h-1zM1069 643h1v1h-1zM1104 643h1v1h-1zM1139 643h1v1h-1zM1174 643h1v1h-1zM1209 643h1v1h-1zM1244 643h1v1h-1zM1279 643h1v1h-1zM1314 643h1v1h-1zM1349 643h1v1h-1zM1384 643h1v1h-1zM1419 643h1v1h-1zM1454 643h1v1h-1zM1489 643h1v1h-1zM1524 643h1v1h-1zM1559 643h1v1h-1zM1594 643h1v1h-1zM1629 643h1v1h-1zM1664 643h1v1h-1zM1699 643h1v1h-1zM1734 643h1v1h-1zM20 852h1v1h-1zM55 852h1v1h-1zM90 852h1v1h-1zM125 852h1v1h-1zM160 852h1v1h-1zM195 852h1v1h-1zM230 852h1v1h-1zM265 852h1v1h-1zM300 852h1v1h-1zM335 852h1v1h-1zM370 852h1v1h-1zM405 852h1v1h-1zM440 852h1v1h-1zM475 852h1v1h-1zM510 852h1v1h-1zM545 852h1v1h-1zM580 852h1v1h-1zM615 852h1v1h-1zM650 852h1v1h-1zM685 852h1v1h-1zM720 852h1v1h-1zM755 852h1v1h-1zM790 852h1v1h-1zM825 852h1v1h-1zM860 852h1v1h-1zM895 852h1v1h-1zM930 852h1v1h-1zM964 852h1v1h-1zM999 852h1v1h-1zM1034 852h1v1h-1zM1069 852h1v1h-1zM1104 852h1v1h-1zM1139 852h1v1h-1zM1174 852h1v1h-1zM1209 852h1v1h-1zM1244 852h1v1h-1zM1279 852h1v1h-1zM1314 852h1v1h-1zM1349 852h1v1h-1zM1384 852h1v1h-1zM1419 852h1v1h-1zM1454 852h1v1h-1zM1489 852h1v1h-1zM1524 852h1v1h-1zM1559 852h1v1h-1zM1594 852h1v1h-1zM1629 852h1v1h-1zM1664 852h1v1h-1zM1699 852h1v1h-1zM1734 852h1v1h-1zM20 840h1v1h-1zM55 840h1v1h-1zM90 840h1v1h-1zM125 840h1v1h-1zM160 840h1v1h-1zM195 840h1v1h-1zM230 840h1v1h-1zM265 840h1v1h-1zM300 840h1v1h-1zM335 840h1v1h-1zM370 840h1v1h-1zM405 840h1v1h-1zM440 840h1v1h-1zM475 840h1v1h-1zM510 840h1v1h-1zM545 840h1v1h-1zM580 840h1v1h-1zM615 840h1v1h-1zM650 840h1v1h-1zM685 840h1v1h-1zM720 840h1v1h-1zM755 840h1v1h-1zM790 840h1v1h-1zM825 840h1v1h-1zM860 840h1v1h-1zM895 840h1v1h-1zM930 840h1v1h-1zM964 840h1v1h-1zM999 840h1v1h-1zM1034 840h1v1h-1zM1069 840h1v1h-1zM1104 840h1v1h-1zM1139 840h1v1h-1zM1174 840h1v1h-1zM1209 840h1v1h-1zM1244 840h1v1h-1zM1279 840h1v1h-1zM1314 840h1v1h-1zM1349 840h1v1h-1zM1384 840h1v1h-1zM1419 840h1v1h-1zM1454 840h1v1h-1zM1489 840h1v1h-1zM1524 840h1v1h-1zM1559 840h1v1h-1zM1594 840h1v1h-1zM1629 840h1v1h-1zM1664 840h1v1h-1zM1699 840h1v1h-1zM1734 840h1v1h-1zM20 829h1v1h-1zM55 829h1v1h-1zM90 829h1v1h-1zM125 829h1v1h-1zM160 829h1v1h-1zM195 829h1v1h-1zM230 829h1v1h-1zM265 829h1v1h-1zM300 829h1v1h-1zM335 829h1v1h-1zM370 829h1v1h-1zM405 829h1v1h-1zM440 829h1v1h-1zM475 829h1v1h-1zM510 829h1v1h-1zM545 829h1v1h-1zM580 829h1v1h-1zM615 829h1v1h-1zM650 829h1v1h-1zM685 829h1v1h-1zM720 829h1v1h-1zM755 829h1v1h-1zM790 829h1v1h-1zM825 829h1v1h-1zM860 829h1v1h-1zM895 829h1v1h-1zM930 829h1v1h-1zM964 829h1v1h-1zM999 829h1v1h-1zM1034 829h1v1h-1zM1069 829h1v1h-1zM1104 829h1v1h-1zM1139 829h1v1h-1zM1174 829h1v1h-1zM1209 829h1v1h-1zM1244 829h1v1h-1zM1279 829h1v1h-1zM1314 829h1v1h-1zM1349 829h1v1h-1zM1384 829h1v1h-1zM1419 829h1v1h-1zM1454 829h1v1h-1zM1489 829h1v1h-1zM1524 829h1v1h-1zM1559 829h1v1h-1zM1594 829h1v1h-1zM1629 829h1v1h-1zM1664 829h1v1h-1zM1699 829h1v1h-1zM1734 829h1v1h-1zM20 817h1v1h-1zM55 817h1v1h-1zM90 817h1v1h-1zM125 817h1v1h-1zM160 817h1v1h-1zM195 817h1v1h-1zM230 817h1v1h-1zM265 817h1v1h-1zM300 817h1v1h-1zM335 817h1v1h-1zM370 817h1v1h-1zM405 817h1v1h-1zM440 817h1v1h-1zM475 817h1v1h-1zM510 817h1v1h-1zM545 817h1v1h-1zM580 817h1v1h-1zM615 817h1v1h-1zM650 817h1v1h-1zM685 817h1v1h-1zM720 817h1v1h-1zM755 817h1v1h-1zM790 817h1v1h-1zM825 817h1v1h-1zM860 817h1v1h-1zM895 817h1v1h-1zM930 817h1v1h-1zM964 817h1v1h-1zM999 817h1v1h-1zM1034 817h1v1h-1zM1069 817h1v1h-1zM1104 817h1v1h-1zM1139 817h1v1h-1zM1174 817h1v1h-1zM1209 817h1v1h-1zM1244 817h1v1h-1zM1279 817h1v1h-1zM1314 817h1v1h-1zM1349 817h1v1h-1zM1384 817h1v1h-1zM1419 817h1v1h-1zM1454 817h1v1h-1zM1489 817h1v1h-1zM1524 817h1v1h-1zM1559 817h1v1h-1zM1594 817h1v1h-1zM1629 817h1v1h-1zM1664 817h1v1h-1zM1699 817h1v1h-1zM1734 817h1v1h-1zM20 805h1v1h-1zM55 805h1v1h-1zM90 805h1v1h-1zM125 805h1v1h-1zM160 805h1v1h-1zM195 805h1v1h-1zM230 805h1v1h-1zM265 805h1v1h-1zM300 805h1v1h-1zM335 805h1v1h-1zM370 805h1v1h-1zM405 805h1v1h-1zM440 805h1v1h-1zM475 805h1v1h-1zM510 805h1v1h-1zM545 805h1v1h-1zM580 805h1v1h-1zM615 805h1v1h-1zM650 805h1v1h-1zM685 805h1v1h-1zM720 805h1v1h-1zM755 805h1v1h-1zM790 805h1v1h-1zM825 805h1v1h-1zM860 805h1v1h-1zM895 805h1v1h-1zM930 805h1v1h-1zM964 805h1v1h-1zM999 805h1v1h-1zM1034 805h1v1h-1zM1069 805h1v1h-1zM1104 805h1v1h-1zM1139 805h1v1h-1zM1174 805h1v1h-1zM1209 805h1v1h-1zM1244 805h1v1h-1zM1279 805h1v1h-1zM1314 805h1v1h-1zM1349 805h1v1h-1zM1384 805h1v1h-1zM1419 805h1v1h-1zM1454 805h1v1h-1zM1489 805h1v1h-1zM1524 805h1v1h-1zM1559 805h1v1h-1zM1594 805h1v1h-1zM1629 805h1v1h-1zM1664 805h1v1h-1zM1699 805h1v1h-1zM1734 805h1v1h-1zM20 794h1v1h-1zM55 794h1v1h-1zM90 794h1v1h-1zM125 794h1v1h-1zM160 794h1v1h-1zM195 794h1v1h-1zM230 794h1v1h-1zM265 794h1v1h-1zM300 794h1v1h-1zM335 794h1v1h-1zM370 794h1v1h-1zM405 794h1v1h-1zM440 794h1v1h-1zM475 794h1v1h-1zM510 794h1v1h-1zM545 794h1v1h-1zM580 794h1v1h-1zM615 794h1v1h-1zM650 794h1v1h-1zM685 794h1v1h-1zM720 794h1v1h-1zM755 794h1v1h-1zM790 794h1v1h-1zM825 794h1v1h-1zM860 794h1v1h-1zM895 794h1v1h-1zM930 794h1v1h-1zM964 794h1v1h-1zM999 794h1v1h-1zM1034 794h1v1h-1zM1069 794h1v1h-1zM1104 794h1v1h-1zM1139 794h1v1h-1zM1174 794h1v1h-1zM1209 794h1v1h-1zM1244 794h1v1h-1zM1279 794h1v1h-1zM1314 794h1v1h-1zM1349 794h1v1h-1zM1384 794h1v1h-1zM1419 794h1v1h-1zM1454 794h1v1h-1zM1489 794h1v1h-1zM1524 794h1v1h-1zM1559 794h1v1h-1zM1594 794h1v1h-1zM1629 794h1v1h-1zM1664 794h1v1h-1zM1699 794h1v1h-1zM1734 794h1v1h-1zM20 782h1v1h-1zM55 782h1v1h-1zM90 782h1v1h-1zM125 782h1v1h-1zM160 782h1v1h-1zM195 782h1v1h-1zM230 782h1v1h-1zM265 782h1v1h-1zM300 782h1v1h-1zM335 782h1v1h-1zM370 782h1v1h-1zM405 782h1v1h-1zM440 782h1v1h-1zM475 782h1v1h-1zM510 782h1v1h-1zM545 782h1v1h-1zM580 782h1v1h-1zM615 782h1v1h-1zM650 782h1v1h-1zM685 782h1v1h-1zM720 782h1v1h-1zM755 782h1v1h-1zM790 782h1v1h-1zM825 782h1v1h-1zM860 782h1v1h-1zM895 782h1v1h-1zM930 782h1v1h-1zM964 782h1v1h-1zM999 782h1v1h-1zM1034 782h1v1h-1zM1069 782h1v1h-1zM1104 782h1v1h-1zM1139 782h1v1h-1zM1174 782h1v1h-1zM1209 782h1v1h-1zM1244 782h1v1h-1zM1279 782h1v1h-1zM1314 782h1v1h-1zM1349 782h1v1h-1zM1384 782h1v1h-1zM1419 782h1v1h-1zM1454 782h1v1h-1zM1489 782h1v1h-1zM1524 782h1v1h-1zM1559 782h1v1h-1zM1594 782h1v1h-1zM1629 782h1v1h-1zM1664 782h1v1h-1zM1699 782h1v1h-1zM1734 782h1v1h-1zM20 771h1v1h-1zM55 771h1v1h-1zM90 771h1v1h-1zM125 771h1v1h-1zM160 771h1v1h-1zM195 771h1v1h-1zM230 771h1v1h-1zM265 771h1v1h-1zM300 771h1v1h-1zM335 771h1v1h-1zM370 771h1v1h-1zM405 771h1v1h-1zM440 771h1v1h-1zM475 771h1v1h-1zM510 771h1v1h-1zM545 771h1v1h-1zM580 771h1v1h-1zM615 771h1v1h-1zM650 771h1v1h-1zM685 771h1v1h-1zM720 771h1v1h-1zM755 771h1v1h-1zM790 771h1v1h-1zM825 771h1v1h-1zM860 771h1v1h-1zM895 771h1v1h-1zM930 771h1v1h-1zM964 771h1v1h-1zM999 771h1v1h-1zM1034 771h1v1h-1zM1069 771h1v1h-1zM1104 771h1v1h-1zM1139 771h1v1h-1zM1174 771h1v1h-1zM1209 771h1v1h-1zM1244 771h1v1h-1zM1279 771h1v1h-1zM1314 771h1v1h-1zM1349 771h1v1h-1zM1384 771h1v1h-1zM1419 771h1v1h-1zM1454 771h1v1h-1zM1489 771h1v1h-1zM1524 771h1v1h-1zM1559 771h1v1h-1zM1594 771h1v1h-1zM1629 771h1v1h-1zM1664 771h1v1h-1zM1699 771h1v1h-1zM1734 771h1v1h-1zM20 875h1v1h-1zM55 875h1v1h-1zM90 875h1v1h-1zM125 875h1v1h-1zM160 875h1v1h-1zM195 875h1v1h-1zM230 875h1v1h-1zM265 875h1v1h-1zM300 875h1v1h-1zM335 875h1v1h-1zM370 875h1v1h-1zM405 875h1v1h-1zM440 875h1v1h-1zM475 875h1v1h-1zM510 875h1v1h-1zM545 875h1v1h-1zM580 875h1v1h-1zM615 875h1v1h-1zM650 875h1v1h-1zM685 875h1v1h-1zM720 875h1v1h-1zM755 875h1v1h-1zM790 875h1v1h-1zM825 875h1v1h-1zM860 875h1v1h-1zM895 875h1v1h-1zM930 875h1v1h-1zM964 875h1v1h-1zM999 875h1v1h-1zM1034 875h1v1h-1zM1069 875h1v1h-1zM1104 875h1v1h-1zM1139 875h1v1h-1zM1174 875h1v1h-1zM1209 875h1v1h-1zM1244 875h1v1h-1zM1279 875h1v1h-1zM1314 875h1v1h-1zM1349 875h1v1h-1zM1384 875h1v1h-1zM1419 875h1v1h-1zM1454 875h1v1h-1zM1489 875h1v1h-1zM1524 875h1v1h-1zM1559 875h1v1h-1zM1594 875h1v1h-1zM1629 875h1v1h-1zM1664 875h1v1h-1zM1699 875h1v1h-1zM1734 875h1v1h-1zM20 964h1v1h-1zM55 964h1v1h-1zM90 964h1v1h-1zM125 964h1v1h-1zM160 964h1v1h-1zM195 964h1v1h-1zM230 964h1v1h-1zM265 964h1v1h-1zM300 964h1v1h-1zM335 964h1v1h-1zM370 964h1v1h-1zM405 964h1v1h-1zM440 964h1v1h-1zM475 964h1v1h-1zM510 964h1v1h-1zM545 964h1v1h-1zM580 964h1v1h-1zM615 964h1v1h-1zM650 964h1v1h-1zM685 964h1v1h-1zM720 964h1v1h-1zM755 964h1v1h-1zM790 964h1v1h-1zM825 964h1v1h-1zM860 964h1v1h-1zM895 964h1v1h-1zM930 964h1v1h-1zM964 964h1v1h-1zM999 964h1v1h-1zM1034 964h1v1h-1zM1069 964h1v1h-1zM1104 964h1v1h-1zM1139 964h1v1h-1zM1174 964h1v1h-1zM1209 964h1v1h-1zM1244 964h1v1h-1zM1279 964h1v1h-1zM1314 964h1v1h-1zM1349 964h1v1h-1zM1384 964h1v1h-1zM1419 964h1v1h-1zM1454 964h1v1h-1zM1489 964h1v1h-1zM1524 964h1v1h-1zM1559 964h1v1h-1zM1594 964h1v1h-1zM1629 964h1v1h-1zM1664 964h1v1h-1zM1699 964h1v1h-1zM1734 964h1v1h-1zM20 952h1v1h-1zM55 952h1v1h-1zM90 952h1v1h-1zM125 952h1v1h-1zM160 952h1v1h-1zM195 952h1v1h-1zM230 952h1v1h-1zM265 952h1v1h-1zM300 952h1v1h-1zM335 952h1v1h-1zM370 952h1v1h-1zM405 952h1v1h-1zM440 952h1v1h-1zM475 952h1v1h-1zM510 952h1v1h-1zM545 952h1v1h-1zM580 952h1v1h-1zM615 952h1v1h-1zM650 952h1v1h-1zM685 952h1v1h-1zM720 952h1v1h-1zM755 952h1v1h-1zM790 952h1v1h-1zM825 952h1v1h-1zM860 952h1v1h-1zM895 952h1v1h-1zM930 952h1v1h-1zM964 952h1v1h-1zM999 952h1v1h-1zM1034 952h1v1h-1zM1069 952h1v1h-1zM1104 952h1v1h-1zM1139 952h1v1h-1zM1174 952h1v1h-1zM1209 952h1v1h-1zM1244 952h1v1h-1zM1279 952h1v1h-1zM1314 952h1v1h-1zM1349 952h1v1h-1zM1384 952h1v1h-1zM1419 952h1v1h-1zM1454 952h1v1h-1zM1489 952h1v1h-1zM1524 952h1v1h-1zM1559 952h1v1h-1zM1594 952h1v1h-1zM1629 952h1v1h-1zM1664 952h1v1h-1zM1699 952h1v1h-1zM1734 952h1v1h-1zM20 941h1v1h-1zM55 941h1v1h-1zM90 941h1v1h-1zM125 941h1v1h-1zM160 941h1v1h-1zM195 941h1v1h-1zM230 941h1v1h-1zM265 941h1v1h-1zM300 941h1v1h-1zM335 941h1v1h-1zM370 941h1v1h-1zM405 941h1v1h-1zM440 941h1v1h-1zM475 941h1v1h-1zM510 941h1v1h-1zM545 941h1v1h-1zM580 941h1v1h-1zM615 941h1v1h-1zM650 941h1v1h-1zM685 941h1v1h-1zM720 941h1v1h-1zM755 941h1v1h-1zM790 941h1v1h-1zM825 941h1v1h-1zM860 941h1v1h-1zM895 941h1v1h-1zM930 941h1v1h-1zM964 941h1v1h-1zM999 941h1v1h-1zM1034 941h1v1h-1zM1069 941h1v1h-1zM1104 941h1v1h-1zM1139 941h1v1h-1zM1174 941h1v1h-1zM1209 941h1v1h-1zM1244 941h1v1h-1zM1279 941h1v1h-1zM1314 941h1v1h-1zM1349 941h1v1h-1zM1384 941h1v1h-1zM1419 941h1v1h-1zM1454 941h1v1h-1zM1489 941h1v1h-1zM1524 941h1v1h-1zM1559 941h1v1h-1zM1594 941h1v1h-1zM1629 941h1v1h-1zM1664 941h1v1h-1zM1699 941h1v1h-1zM1734 941h1v1h-1zM20 929h1v1h-1zM55 929h1v1h-1zM90 929h1v1h-1zM125 929h1v1h-1zM160 929h1v1h-1zM195 929h1v1h-1zM230 929h1v1h-1zM265 929h1v1h-1zM300 929h1v1h-1zM335 929h1v1h-1zM370 929h1v1h-1zM405 929h1v1h-1zM440 929h1v1h-1zM475 929h1v1h-1zM510 929h1v1h-1zM545 929h1v1h-1zM580 929h1v1h-1zM615 929h1v1h-1zM650 929h1v1h-1zM685 929h1v1h-1zM720 929h1v1h-1zM755 929h1v1h-1zM790 929h1v1h-1zM825 929h1v1h-1zM860 929h1v1h-1zM895 929h1v1h-1zM930 929h1v1h-1zM964 929h1v1h-1zM999 929h1v1h-1zM1034 929h1v1h-1zM1069 929h1v1h-1zM1104 929h1v1h-1zM1139 929h1v1h-1zM1174 929h1v1h-1zM1209 929h1v1h-1zM1244 929h1v1h-1zM1279 929h1v1h-1zM1314 929h1v1h-1zM1349 929h1v1h-1zM1384 929h1v1h-1zM1419 929h1v1h-1zM1454 929h1v1h-1zM1489 929h1v1h-1zM1524 929h1v1h-1zM1559 929h1v1h-1zM1594 929h1v1h-1zM1629 929h1v1h-1zM1664 929h1v1h-1zM1699 929h1v1h-1zM1734 929h1v1h-1zM20 918h1v1h-1zM55 918h1v1h-1zM90 918h1v1h-1zM125 918h1v1h-1zM160 918h1v1h-1zM195 918h1v1h-1zM230 918h1v1h-1zM265 918h1v1h-1zM300 918h1v1h-1zM335 918h1v1h-1zM370 918h1v1h-1zM405 918h1v1h-1zM440 918h1v1h-1zM475 918h1v1h-1zM510 918h1v1h-1zM545 918h1v1h-1zM580 918h1v1h-1zM615 918h1v1h-1zM650 918h1v1h-1zM685 918h1v1h-1zM720 918h1v1h-1zM755 918h1v1h-1zM790 918h1v1h-1zM825 918h1v1h-1zM860 918h1v1h-1zM895 918h1v1h-1zM930 918h1v1h-1zM964 918h1v1h-1zM999 918h1v1h-1zM1034 918h1v1h-1zM1069 918h1v1h-1zM1104 918h1v1h-1zM1139 918h1v1h-1zM1174 918h1v1h-1zM1209 918h1v1h-1zM1244 918h1v1h-1zM1279 918h1v1h-1zM1314 918h1v1h-1zM1349 918h1v1h-1zM1384 918h1v1h-1zM1419 918h1v1h-1zM1454 918h1v1h-1zM1489 918h1v1h-1zM1524 918h1v1h-1zM1559 918h1v1h-1zM1594 918h1v1h-1zM1629 918h1v1h-1zM1664 918h1v1h-1zM1699 918h1v1h-1zM1734 918h1v1h-1zM20 906h1v1h-1zM55 906h1v1h-1zM90 906h1v1h-1zM125 906h1v1h-1zM160 906h1v1h-1zM195 906h1v1h-1zM230 906h1v1h-1zM265 906h1v1h-1zM300 906h1v1h-1zM335 906h1v1h-1zM370 906h1v1h-1zM405 906h1v1h-1zM440 906h1v1h-1zM475 906h1v1h-1zM510 906h1v1h-1zM545 906h1v1h-1zM580 906h1v1h-1zM615 906h1v1h-1zM650 906h1v1h-1zM685 906h1v1h-1zM720 906h1v1h-1zM755 906h1v1h-1zM790 906h1v1h-1zM825 906h1v1h-1zM860 906h1v1h-1zM895 906h1v1h-1zM930 906h1v1h-1zM964 906h1v1h-1zM999 906h1v1h-1zM1034 906h1v1h-1zM1069 906h1v1h-1zM1104 906h1v1h-1zM1139 906h1v1h-1zM1174 906h1v1h-1zM1209 906h1v1h-1zM1244 906h1v1h-1zM1279 906h1v1h-1zM1314 906h1v1h-1zM1349 906h1v1h-1zM1384 906h1v1h-1zM1419 906h1v1h-1zM1454 906h1v1h-1zM1489 906h1v1h-1zM1524 906h1v1h-1zM1559 906h1v1h-1zM1594 906h1v1h-1zM1629 906h1v1h-1zM1664 906h1v1h-1zM1699 906h1v1h-1zM1734 906h1v1h-1zM20 894h1v1h-1zM55 894h1v1h-1zM90 894h1v1h-1zM125 894h1v1h-1zM160 894h1v1h-1zM195 894h1v1h-1zM230 894h1v1h-1zM265 894h1v1h-1zM300 894h1v1h-1zM335 894h1v1h-1zM370 894h1v1h-1zM405 894h1v1h-1zM440 894h1v1h-1zM475 894h1v1h-1zM510 894h1v1h-1zM545 894h1v1h-1zM580 894h1v1h-1zM615 894h1v1h-1zM650 894h1v1h-1zM685 894h1v1h-1zM720 894h1v1h-1zM755 894h1v1h-1zM790 894h1v1h-1zM825 894h1v1h-1zM860 894h1v1h-1zM895 894h1v1h-1zM930 894h1v1h-1zM964 894h1v1h-1zM999 894h1v1h-1zM1034 894h1v1h-1zM1069 894h1v1h-1zM1104 894h1v1h-1zM1139 894h1v1h-1zM1174 894h1v1h-1zM1209 894h1v1h-1zM1244 894h1v1h-1zM1279 894h1v1h-1zM1314 894h1v1h-1zM1349 894h1v1h-1zM1384 894h1v1h-1zM1419 894h1v1h-1zM1454 894h1v1h-1zM1489 894h1v1h-1zM1524 894h1v1h-1zM1559 894h1v1h-1zM1594 894h1v1h-1zM1629 894h1v1h-1zM1664 894h1v1h-1zM1699 894h1v1h-1zM1734 894h1v1h-1zM20 883h1v1h-1zM55 883h1v1h-1zM90 883h1v1h-1zM125 883h1v1h-1zM160 883h1v1h-1zM195 883h1v1h-1zM230 883h1v1h-1zM265 883h1v1h-1zM300 883h1v1h-1zM335 883h1v1h-1zM370 883h1v1h-1zM405 883h1v1h-1zM440 883h1v1h-1zM475 883h1v1h-1zM510 883h1v1h-1zM545 883h1v1h-1zM580 883h1v1h-1zM615 883h1v1h-1zM650 883h1v1h-1zM685 883h1v1h-1zM720 883h1v1h-1zM755 883h1v1h-1zM790 883h1v1h-1zM825 883h1v1h-1zM860 883h1v1h-1zM895 883h1v1h-1zM930 883h1v1h-1zM964 883h1v1h-1zM999 883h1v1h-1zM1034 883h1v1h-1zM1069 883h1v1h-1zM1104 883h1v1h-1zM1139 883h1v1h-1zM1174 883h1v1h-1zM1209 883h1v1h-1zM1244 883h1v1h-1zM1279 883h1v1h-1zM1314 883h1v1h-1zM1349 883h1v1h-1zM1384 883h1v1h-1zM1419 883h1v1h-1zM1454 883h1v1h-1zM1489 883h1v1h-1zM1524 883h1v1h-1zM1559 883h1v1h-1zM1594 883h1v1h-1zM1629 883h1v1h-1zM1664 883h1v1h-1zM1699 883h1v1h-1zM1734 883h1v1h-1zM20 987h1v1h-1zM55 987h1v1h-1zM90 987h1v1h-1zM125 987h1v1h-1zM160 987h1v1h-1zM195 987h1v1h-1zM230 987h1v1h-1zM265 987h1v1h-1zM300 987h1v1h-1zM335 987h1v1h-1zM370 987h1v1h-1zM405 987h1v1h-1zM440 987h1v1h-1zM475 987h1v1h-1zM510 987h1v1h-1zM545 987h1v1h-1zM580 987h1v1h-1zM615 987h1v1h-1zM650 987h1v1h-1zM685 987h1v1h-1zM720 987h1v1h-1zM755 987h1v1h-1zM790 987h1v1h-1zM825 987h1v1h-1zM860 987h1v1h-1zM895 987h1v1h-1zM930 987h1v1h-1zM964 987h1v1h-1zM999 987h1v1h-1zM1034 987h1v1h-1zM1069 987h1v1h-1zM1104 987h1v1h-1zM1139 987h1v1h-1zM1174 987h1v1h-1zM1209 987h1v1h-1zM1244 987h1v1h-1zM1279 987h1v1h-1zM1314 987h1v1h-1zM1349 987h1v1h-1zM1384 987h1v1h-1zM1419 987h1v1h-1zM1454 987h1v1h-1zM1489 987h1v1h-1zM1524 987h1v1h-1zM1559 987h1v1h-1zM1594 987h1v1h-1zM1629 987h1v1h-1zM1664 987h1v1h-1zM1699 987h1v1h-1zM1734 987h1v1h-1z"/>
<line x1="230.5" y1="58" x2="230.5" y2="993" stroke="#3a3a3a" stroke-width="1" stroke-dasharray="1 1.3"/>
<line x1="405.5" y1="58" x2="405.5" y2="993" stroke="#3a3a3a" stroke-width="1" stroke-dasharray="1 1.3"/>
<line x1="580.5" y1="58" x2="580.5" y2="993" stroke="#3a3a3a" stroke-width="1" stroke-dasharray="1 1.3"/>
<line x1="755.5" y1="58" x2="755.5" y2="993" stroke="#3a3a3a" stroke-width="1" stroke-dasharray="1 1.3"/>
<line x1="930.5" y1="58" x2="930.5" y2="993" stroke="#3a3a3a" stroke-width="1" stroke-dasharray="1 1.3"/>
<line x1="1104.5" y1="58" x2="1104.5" y2="993" stroke="#3a3a3a" stroke-width="1" stroke-dasharray="1 1.3"/>
<line x1="1279.5" y1="58" x2="1279.5" y2="993" stroke="#3a3a3a" stroke-width="1" stroke-dasharray="1 1.3"/>
<line x1="1454.5" y1="58" x2="1454.5" y2="993" stroke="#3a3a3a" stroke-width="1" stroke-dasharray="1 1.3"/>
<line x1="1629.5" y1="58" x2="1629.5" y2="993" stroke="#3a3a3a" stroke-width="1" stroke-dasharray="1 1.3"/>
<line x1="55.5" y1="69" x2="55.5" y2="993" stroke="#333" stroke-width="1" stroke-dasharray="5 5"/>
<rect x="3" y="173" width="1748" height="2" fill="#5a5a5a"/>
<rect x="3" y="290" width="1748" height="2" fill="#5a5a5a"/>
<rect x="3" y="407" width="1748" height="2" fill="#5a5a5a"/>
<rect x="3" y="524" width="1748" height="2" fill="#5a5a5a"/>
<rect x="3" y="641" width="1748" height="2" fill="#5a5a5a"/>
<rect x="3" y="758" width="1748" height="2" fill="#5a5a5a"/>
<rect x="3" y="875" width="1748" height="2" fill="#5a5a5a"/>
<line x1="3" y1="161.5" x2="1738" y2="161.5" stroke="#3c3c3c" stroke-width="1.2" stroke-dasharray="5 5"/>
<line x1="3" y1="246.5" x2="1738" y2="246.5" stroke="#3c3c3c" stroke-width="1.2" stroke-dasharray="5 5"/>
<line x1="3" y1="349.5" x2="1738" y2="349.5" stroke="#3c3c3c" stroke-width="1.2" stroke-dasharray="5 5"/>
<line x1="3" y1="478.5" x2="1738" y2="478.5" stroke="#3c3c3c" stroke-width="1.2" stroke-dasharray="5 5"/>
<line x1="3" y1="583.5" x2="1738" y2="583.5" stroke="#3c3c3c" stroke-width="1.2" stroke-dasharray="5 5"/>
<line x1="3" y1="863.5" x2="1738" y2="863.5" stroke="#3c3c3c" stroke-width="1.2" stroke-dasharray="5 5"/>
<line x1="3" y1="975.5" x2="1738" y2="975.5" stroke="#3c3c3c" stroke-width="1.2" stroke-dasharray="5 5"/>
<rect x="1716.9" y="62.7" width="31.1" height="14" fill="#fff"/>
<rect x="1716.9" y="85.8" width="31.1" height="14" fill="#fff"/>
<rect x="1716.9" y="108.9" width="31.1" height="14" fill="#fff"/>
<rect x="1716.9" y="132.0" width="31.1" height="14" fill="#fff"/>
<rect x="1724.2" y="155.1" width="23.8" height="14" fill="#fff"/>
<rect x="1705.9" y="182.2" width="42.1" height="14" fill="#fff"/>
<rect x="1698.6" y="205.3" width="49.4" height="14" fill="#fff"/>
<rect x="1698.6" y="228.4" width="49.4" height="14" fill="#fff"/>
<rect x="1694.2" y="251.6" width="53.8" height="14" fill="#fff"/>
<rect x="1694.2" y="274.7" width="53.8" height="14" fill="#fff"/>
<rect x="1705.9" y="296.8" width="42.1" height="14" fill="#fff"/>
<rect x="1698.6" y="319.9" width="49.4" height="14" fill="#fff"/>
<rect x="1724.2" y="343.0" width="23.8" height="14" fill="#fff"/>
<rect x="1694.2" y="366.1" width="53.8" height="14" fill="#fff"/>
<rect x="1701.5" y="389.2" width="46.5" height="14" fill="#fff"/>
<rect x="1724.2" y="413.6" width="23.8" height="14" fill="#fff"/>
<rect x="1698.6" y="436.7" width="49.4" height="14" fill="#fff"/>
<rect x="1698.6" y="459.8" width="49.4" height="14" fill="#fff"/>
<rect x="1694.2" y="482.9" width="53.8" height="14" fill="#fff"/>
<rect x="1694.2" y="506.1" width="53.8" height="14" fill="#fff"/>
<rect x="1724.2" y="530.8" width="23.8" height="14" fill="#fff"/>
<rect x="1724.2" y="553.9" width="23.8" height="14" fill="#fff"/>
<rect x="1724.2" y="577.0" width="23.8" height="14" fill="#fff"/>
<rect x="1719.8" y="600.1" width="28.2" height="14" fill="#fff"/>
<rect x="1719.8" y="623.2" width="28.2" height="14" fill="#fff"/>
<rect x="1724.2" y="648.3" width="23.8" height="14" fill="#fff"/>
<rect x="1705.9" y="671.4" width="42.1" height="14" fill="#fff"/>
<rect x="1724.2" y="694.5" width="23.8" height="14" fill="#fff"/>
<rect x="1705.9" y="717.6" width="42.1" height="14" fill="#fff"/>
<rect x="1724.2" y="740.7" width="23.8" height="14" fill="#fff"/>
<rect x="1673.7" y="764.5" width="74.3" height="14" fill="#fff"/>
<rect x="1673.7" y="787.6" width="74.3" height="14" fill="#fff"/>
<rect x="1673.7" y="810.7" width="74.3" height="14" fill="#fff"/>
<rect x="1673.7" y="833.8" width="74.3" height="14" fill="#fff"/>
<rect x="1725.2" y="856.9" width="22.8" height="14" fill="#fff"/>
<rect x="1670.0" y="899.7" width="78.0" height="14" fill="#fff"/>
<rect x="1670.0" y="922.8" width="78.0" height="14" fill="#fff"/>
<rect x="1684.7" y="945.9" width="63.3" height="14" fill="#fff"/>
<rect x="1725.0" y="969.0" width="23.0" height="14" fill="#fff"/>
<rect x="44.5" y="741" width="22.0" height="15" fill="#fff"/>
<rect x="208.1" y="741" width="44.5" height="15" fill="#fff"/>
<rect x="388.7" y="741" width="33.3" height="15" fill="#fff"/>
<rect x="554.2" y="741" width="52.0" height="15" fill="#fff"/>
<rect x="734.7" y="741" width="40.8" height="15" fill="#fff"/>
<rect x="904.0" y="741" width="52.0" height="15" fill="#fff"/>
<rect x="1084.5" y="741" width="40.8" height="15" fill="#fff"/>
<rect x="1253.8" y="741" width="52.0" height="15" fill="#fff"/>
<rect x="1434.3" y="741" width="40.8" height="15" fill="#fff"/>
<rect x="1603.6" y="741" width="52.0" height="15" fill="#fff"/>
<polyline fill="none" stroke="#141414" stroke-width="1.25" stroke-linejoin="round" points="3.0,160.4 55.6,160.2 56.7,156.8 65.0,149.0 74.4,142.7 90.0,135.9 107.7,128.6 125.4,124.0 144.2,120.8 159.8,119.8 168.1,119.3 171.3,121.9 174.4,128.1 180.6,132.3 186.9,135.4 196.3,135.9 222.3,134.9 237.9,133.3 264.4,131.6 298.8,128.7 315.9,126.0 350.3,123.0 367.5,120.5 384.7,118.8 405.3,117.4 427.7,117.7 439.7,118.8 458.6,120.1 467.2,124.3 475.8,127.3 487.8,140.2 496.4,145.4 513.6,150.0 556.6,152.3 875.0,155.2 960.0,156.0 1110.0,158.0 1280.0,159.0 1751.0,160.3" />
<polyline fill="none" stroke="#1fc3cc" stroke-width="1.25" stroke-linejoin="round" points="3.0,245.7 55.5,245.7 55.8,208.5 56.5,218.0 57.5,213.0 58.5,217.0 62.0,219.0 85.8,220.0 133.8,221.9 200.0,223.3 408.0,227.5 617.0,231.7 825.0,235.8 1000.0,240.4 1100.0,243.3 1280.0,245.8 1500.0,251.0 1751.0,254.3" />
<line x1="85.5" y1="216.5" x2="85.5" y2="223.5" stroke="#1fc3cc" stroke-width="1.2"/>
<line x1="304" y1="222.0" x2="304" y2="229.0" stroke="#1fc3cc" stroke-width="1.2"/>
<line x1="354" y1="223.0" x2="354" y2="230.0" stroke="#1fc3cc" stroke-width="1.2"/>
<line x1="691" y1="229.7" x2="691" y2="236.7" stroke="#1fc3cc" stroke-width="1.2"/>
<polyline fill="none" stroke="#e3275a" stroke-width="1.25" stroke-linejoin="round" points="3.0,349.3 54.5,349.3 55.8,323.0 56.4,380.0 56.9,356.0 59.0,357.0 67.0,356.5 75.5,356.3 76.0,354.3 115.6,351.8 144.8,350.7 169.6,350.2 171.5,352.5 188.6,354.1 202.5,353.5 229.6,353.1 306.7,351.0 358.8,349.0 406.7,346.9 442.0,344.2 465.0,339.6 469.0,335.4 477.5,335.0 494.0,343.8 504.6,346.9 521.0,349.0 1751.0,349.3" />
<polyline fill="none" stroke="#7cc339" stroke-width="1.25" stroke-linejoin="round" points="3.0,477.5 170.0,477.5 177.5,472.5 185.0,458.8 192.5,447.5 198.8,440.8 210.0,440.0 335.0,440.0 385.0,440.8 447.5,442.0 470.0,446.2 485.0,456.2 500.0,463.8 520.0,471.2 550.0,475.8 585.0,476.8 640.0,477.4 1751.0,477.5" />
<polyline fill="none" stroke="#f28c28" stroke-width="1.3" stroke-linejoin="round" points="3.0,583.5 1751.0,583.5" />
<line x1="3" y1="583.5" x2="1738" y2="583.5" stroke="#3c3c3c" stroke-width="1" stroke-dasharray="5 5"/>
<polyline fill="none" stroke="#2323b4" stroke-width="1.2" stroke-linejoin="round" points="3.0,746.4 20.0,745.5 40.0,744.5 55.5,744.0 55.5,653.3 1751.0,653.3" />
<line x1="85.5" y1="648.3" x2="85.5" y2="653.3" stroke="#2323b4" stroke-width="1.1"/>
<line x1="305.5" y1="650.3" x2="305.5" y2="653.3" stroke="#2323b4" stroke-width="1.1"/>
<line x1="354" y1="651.3" x2="354" y2="653.3" stroke="#2323b4" stroke-width="1.1"/>
<line x1="691" y1="650.3" x2="691" y2="653.3" stroke="#2323b4" stroke-width="1.1"/>
<polyline fill="none" stroke="#e8841e" stroke-width="1.3" stroke-linejoin="round" points="3.0,860.5 55.5,860.3 61.3,844.1 90.3,759.5" />
<polyline fill="none" stroke="#6b1f8f" stroke-width="1.5" stroke-linejoin="round" points="3.0,979.4 42.8,978.2 55.5,977.6 92.6,984.6 104.2,984.0 115.7,982.5 127.3,981.1 138.9,979.4 144.7,976.2 156.2,975.3 167.8,974.2 169.6,970.7 171.3,951.0 172.5,927.9 174.8,904.7 177.0,887.4 178.8,876.5" />
<polyline fill="none" stroke="#6b1f8f" stroke-width="1.5" stroke-linejoin="round" points="468.5,876.5 469.7,892.0 472.6,904.7 474.9,922.1 477.8,939.4 481.2,953.3 489.4,968.4 500.9,978.8 510.2,981.7 519.4,982.8 565.7,982.8 579.6,981.7 612.0,979.4 650.0,977.0 683.3,974.2 756.2,967.5 808.3,960.8 870.8,955.4 929.2,950.8 995.8,943.5 1104.4,935.6 1333.7,921.9 1563.0,909.0 1751.0,897.3" />
<path d="M9.5 102.5 H77 L84 115.75 L77 129.0 H9.5 Q6.5 129.0 6.5 126.0 V105.5 Q6.5 102.5 9.5 102.5 Z" fill="#e6e6e6" stroke="#262626" stroke-width="2.2"/>
<path d="M7.6 105.5 Q7.6 103.6 9.5 103.6 H33 V127.9 H9.5 Q7.6 127.9 7.6 126.0 Z" fill="#e6e6e6"/>
<line x1="33" y1="102.5" x2="33" y2="129.0" stroke="#262626" stroke-width="2"/>
<text x="20.25" y="120.25" font-size="12.5" fill="#333" text-anchor="middle" font-weight="normal" >C 1</text>
<text x="57.0" y="120.25" font-size="12.5" fill="#333" text-anchor="middle" font-weight="normal" >20 V</text>
<path d="M9.5 219.5 H77 L84 232.25 L77 245.0 H9.5 Q6.5 245.0 6.5 242.0 V222.5 Q6.5 219.5 9.5 219.5 Z" fill="#e6f7f8" stroke="#20c2cc" stroke-width="2.2"/>
<path d="M7.6 222.5 Q7.6 220.6 9.5 220.6 H32.8 V243.9 H9.5 Q7.6 243.9 7.6 242.0 Z" fill="#e6f7f8"/>
<line x1="32.8" y1="219.5" x2="32.8" y2="245.0" stroke="#20c2cc" stroke-width="2"/>
<text x="20.15" y="236.75" font-size="12.5" fill="#111" text-anchor="middle" font-weight="normal" >C 2</text>
<text x="56.9" y="236.75" font-size="12.5" fill="#111" text-anchor="middle" font-weight="normal" >300 mV</text>
<path d="M9.5 337.0 H31 L42 350 L31 363.0 H9.5 Q6.5 363.0 6.5 360.0 V340.0 Q6.5 337.0 9.5 337.0 Z" fill="#fbe9ee" stroke="#e8456e" stroke-width="1.5"/>
<text x="22" y="354.5" font-size="12.5" fill="#e8507a" text-anchor="middle" font-weight="normal" >C 3</text>
<path d="M9.5 453.6 H77 L84 466.35 L77 479.1 H9.5 Q6.5 479.1 6.5 476.1 V456.6 Q6.5 453.6 9.5 453.6 Z" fill="#f2f8ea" stroke="#7cc339" stroke-width="2.2"/>
<path d="M7.6 456.6 Q7.6 454.70000000000005 9.5 454.70000000000005 H33 V478.0 H9.5 Q7.6 478.0 7.6 476.1 Z" fill="#f2f8ea"/>
<line x1="33" y1="453.6" x2="33" y2="479.1" stroke="#7cc339" stroke-width="2"/>
<text x="20.25" y="470.85" font-size="12.5" fill="#111" text-anchor="middle" font-weight="normal" >C 4</text>
<text x="57.0" y="470.85" font-size="12.5" fill="#111" text-anchor="middle" font-weight="normal" >200 mV</text>
<path d="M9.5 570.3 H31 L42 583.3 L31 596.3 H9.5 Q6.5 596.3 6.5 593.3 V573.3 Q6.5 570.3 9.5 570.3 Z" fill="#fff1e2" stroke="#f0a050" stroke-width="1.5"/>
<text x="22" y="587.8" font-size="12.5" fill="#222" text-anchor="middle" font-weight="normal" >C 5</text>
<path d="M9.5 687.5 H77 L84 700.75 L77 714.0 H9.5 Q6.5 714.0 6.5 711.0 V690.5 Q6.5 687.5 9.5 687.5 Z" fill="#e8e8f8" stroke="#111" stroke-width="2.2"/>
<path d="M7.6 690.5 Q7.6 688.6 9.5 688.6 H33 V712.9 H9.5 Q7.6 712.9 7.6 711.0 Z" fill="#2a2ac2"/>
<line x1="33" y1="687.5" x2="33" y2="714.0" stroke="#111" stroke-width="2"/>
<text x="20.25" y="705.25" font-size="12.5" fill="#fff" text-anchor="middle" font-weight="normal" >C 6</text>
<text x="57.0" y="705.25" font-size="12.5" fill="#2a2ac2" text-anchor="middle" font-weight="normal" >3 V</text>
<path d="M9.5 850.0 H31 L42 863 L31 876.0 H9.5 Q6.5 876.0 6.5 873.0 V853.0 Q6.5 850.0 9.5 850.0 Z" fill="#fff1e2" stroke="#f0a050" stroke-width="1.5"/>
<text x="22" y="867.5" font-size="12.5" fill="#222" text-anchor="middle" font-weight="normal" >M 1</text>
<path d="M9.5 961.5 H31 L42 974.5 L31 987.5 H9.5 Q6.5 987.5 6.5 984.5 V964.5 Q6.5 961.5 9.5 961.5 Z" fill="#f1e8f6" stroke="#b590c8" stroke-width="1.5"/>
<text x="22" y="979.0" font-size="12.5" fill="#6b1f8f" text-anchor="middle" font-weight="normal" >M 2</text>
<text x="102.3" y="122.3" font-size="19.3" fill="#000">U_loop,coil</text>
<text x="101.5" y="121.5" font-size="19.3" fill="#111">U_loop,coil</text>
<text x="102.8" y="239.10000000000002" font-size="19.3" fill="#000">U_Bt,coil</text>
<text x="102" y="238.3" font-size="19.3" fill="#1fc3cc">U_Bt,coil</text>
<text x="55.3" y="355.8" font-size="19.3" fill="#000">U_Rog,coil</text>
<text x="54.5" y="355" font-size="19.3" fill="#e3275a">U_Rog,coil</text>
<text x="102.3" y="473.8" font-size="19.3" fill="#000">U_Photod</text>
<text x="101.5" y="473" font-size="19.3" fill="#7cc339">U_Photod</text>
<text x="54.3" y="590.0" font-size="19.3" fill="#000">U_Diamagn</text>
<text x="53.5" y="589.2" font-size="19.3" fill="#f28c28">U_Diamagn</text>
<text x="101.8" y="707.5" font-size="19.3" fill="#000">Trigger</text>
<text x="101" y="706.7" font-size="19.3" fill="#2323b4">Trigger</text>
<text x="54.8" y="864.0999999999999" font-size="25.5" fill="#000">B_t</text>
<text x="54" y="863.3" font-size="25.5" fill="#e8841e">B_t</text>
<text x="53.8" y="981.8" font-size="20" fill="#000">I_p</text>
<text x="53" y="981" font-size="20" fill="#6b1f8f">I_p</text>
<text x="1746.8" y="74.60000000000001" font-size="13.2" fill="#000" text-anchor="end">40 V</text>
<text x="1746" y="73.7" font-size="13.2" fill="#202020" stroke="#202020" stroke-width="0.3" text-anchor="end">40 V</text>
<text x="1746.8" y="97.7" font-size="13.2" fill="#000" text-anchor="end">30 V</text>
<text x="1746" y="96.8" font-size="13.2" fill="#202020" stroke="#202020" stroke-width="0.3" text-anchor="end">30 V</text>
<text x="1746.8" y="120.80000000000001" font-size="13.2" fill="#000" text-anchor="end">20 V</text>
<text x="1746" y="119.9" font-size="13.2" fill="#202020" stroke="#202020" stroke-width="0.3" text-anchor="end">20 V</text>
<text x="1746.8" y="143.9" font-size="13.2" fill="#000" text-anchor="end">10 V</text>
<text x="1746" y="143.0" font-size="13.2" fill="#202020" stroke="#202020" stroke-width="0.3" text-anchor="end">10 V</text>
<text x="1746.8" y="167.0" font-size="13.2" fill="#000" text-anchor="end">0 V</text>
<text x="1746" y="166.1" font-size="13.2" fill="#202020" stroke="#202020" stroke-width="0.3" text-anchor="end">0 V</text>
<text x="1746.8" y="194.1" font-size="13.2" fill="#000" text-anchor="end">1.25 V</text>
<text x="1746" y="193.2" font-size="13.2" fill="#1fc3cc" stroke="#1fc3cc" stroke-width="0.3" text-anchor="end">1.25 V</text>
<text x="1746.8" y="217.20000000000002" font-size="13.2" fill="#000" text-anchor="end">750 mV</text>
<text x="1746" y="216.3" font-size="13.2" fill="#1fc3cc" stroke="#1fc3cc" stroke-width="0.3" text-anchor="end">750 mV</text>
<text x="1746.8" y="240.3" font-size="13.2" fill="#000" text-anchor="end">250 mV</text>
<text x="1746" y="239.4" font-size="13.2" fill="#1fc3cc" stroke="#1fc3cc" stroke-width="0.3" text-anchor="end">250 mV</text>
<text x="1746.8" y="263.5" font-size="13.2" fill="#000" text-anchor="end">-250 mV</text>
<text x="1746" y="262.6" font-size="13.2" fill="#1fc3cc" stroke="#1fc3cc" stroke-width="0.3" text-anchor="end">-250 mV</text>
<text x="1746.8" y="286.59999999999997" font-size="13.2" fill="#000" text-anchor="end">-750 mV</text>
<text x="1746" y="285.7" font-size="13.2" fill="#1fc3cc" stroke="#1fc3cc" stroke-width="0.3" text-anchor="end">-750 mV</text>
<text x="1746.8" y="308.7" font-size="13.2" fill="#000" text-anchor="end">1.80 V</text>
<text x="1746" y="307.8" font-size="13.2" fill="#e3275a" stroke="#e3275a" stroke-width="0.3" text-anchor="end">1.80 V</text>
<text x="1746.8" y="331.79999999999995" font-size="13.2" fill="#000" text-anchor="end">900 mV</text>
<text x="1746" y="330.9" font-size="13.2" fill="#e3275a" stroke="#e3275a" stroke-width="0.3" text-anchor="end">900 mV</text>
<text x="1746.8" y="354.9" font-size="13.2" fill="#000" text-anchor="end">0 V</text>
<text x="1746" y="354.0" font-size="13.2" fill="#e3275a" stroke="#e3275a" stroke-width="0.3" text-anchor="end">0 V</text>
<text x="1746.8" y="378.0" font-size="13.2" fill="#000" text-anchor="end">-900 mV</text>
<text x="1746" y="377.1" font-size="13.2" fill="#e3275a" stroke="#e3275a" stroke-width="0.3" text-anchor="end">-900 mV</text>
<text x="1746.8" y="401.09999999999997" font-size="13.2" fill="#000" text-anchor="end">-1.80 V</text>
<text x="1746" y="400.2" font-size="13.2" fill="#e3275a" stroke="#e3275a" stroke-width="0.3" text-anchor="end">-1.80 V</text>
<text x="1746.8" y="425.5" font-size="13.2" fill="#000" text-anchor="end">1 V</text>
<text x="1746" y="424.6" font-size="13.2" fill="#7cc339" stroke="#7cc339" stroke-width="0.3" text-anchor="end">1 V</text>
<text x="1746.8" y="448.59999999999997" font-size="13.2" fill="#000" text-anchor="end">600 mV</text>
<text x="1746" y="447.7" font-size="13.2" fill="#7cc339" stroke="#7cc339" stroke-width="0.3" text-anchor="end">600 mV</text>
<text x="1746.8" y="471.7" font-size="13.2" fill="#000" text-anchor="end">200 mV</text>
<text x="1746" y="470.8" font-size="13.2" fill="#7cc339" stroke="#7cc339" stroke-width="0.3" text-anchor="end">200 mV</text>
<text x="1746.8" y="494.79999999999995" font-size="13.2" fill="#000" text-anchor="end">-200 mV</text>
<text x="1746" y="493.9" font-size="13.2" fill="#7cc339" stroke="#7cc339" stroke-width="0.3" text-anchor="end">-200 mV</text>
<text x="1746.8" y="518.0" font-size="13.2" fill="#000" text-anchor="end">-600 mV</text>
<text x="1746" y="517.1" font-size="13.2" fill="#7cc339" stroke="#7cc339" stroke-width="0.3" text-anchor="end">-600 mV</text>
<text x="1746.8" y="542.6999999999999" font-size="13.2" fill="#000" text-anchor="end">4 V</text>
<text x="1746" y="541.8" font-size="13.2" fill="#f28c28" stroke="#f28c28" stroke-width="0.3" text-anchor="end">4 V</text>
<text x="1746.8" y="565.8" font-size="13.2" fill="#000" text-anchor="end">2 V</text>
<text x="1746" y="564.9" font-size="13.2" fill="#f28c28" stroke="#f28c28" stroke-width="0.3" text-anchor="end">2 V</text>
<text x="1746.8" y="588.9" font-size="13.2" fill="#000" text-anchor="end">0 V</text>
<text x="1746" y="588.0" font-size="13.2" fill="#f28c28" stroke="#f28c28" stroke-width="0.3" text-anchor="end">0 V</text>
<text x="1746.8" y="612.0" font-size="13.2" fill="#000" text-anchor="end">-2 V</text>
<text x="1746" y="611.1" font-size="13.2" fill="#f28c28" stroke="#f28c28" stroke-width="0.3" text-anchor="end">-2 V</text>
<text x="1746.8" y="635.1" font-size="13.2" fill="#000" text-anchor="end">-4 V</text>
<text x="1746" y="634.2" font-size="13.2" fill="#f28c28" stroke="#f28c28" stroke-width="0.3" text-anchor="end">-4 V</text>
<text x="1746.8" y="660.1999999999999" font-size="13.2" fill="#000" text-anchor="end">6 V</text>
<text x="1746" y="659.3" font-size="13.2" fill="#2323b4" stroke="#2323b4" stroke-width="0.3" text-anchor="end">6 V</text>
<text x="1746.8" y="683.3" font-size="13.2" fill="#000" text-anchor="end">4.50 V</text>
<text x="1746" y="682.4" font-size="13.2" fill="#2323b4" stroke="#2323b4" stroke-width="0.3" text-anchor="end">4.50 V</text>
<text x="1746.8" y="706.4" font-size="13.2" fill="#000" text-anchor="end">3 V</text>
<text x="1746" y="705.5" font-size="13.2" fill="#2323b4" stroke="#2323b4" stroke-width="0.3" text-anchor="end">3 V</text>
<text x="1746.8" y="729.5" font-size="13.2" fill="#000" text-anchor="end">1.50 V</text>
<text x="1746" y="728.6" font-size="13.2" fill="#2323b4" stroke="#2323b4" stroke-width="0.3" text-anchor="end">1.50 V</text>
<text x="1746.8" y="752.6" font-size="13.2" fill="#000" text-anchor="end">0 V</text>
<text x="1746" y="751.7" font-size="13.2" fill="#2323b4" stroke="#2323b4" stroke-width="0.3" text-anchor="end">0 V</text>
<text x="1746.8" y="776.4" font-size="13.2" fill="#000" text-anchor="end">629.963 mT</text>
<text x="1746" y="775.5" font-size="13.2" fill="#e8841e" stroke="#e8841e" stroke-width="0.3" text-anchor="end">629.963 mT</text>
<text x="1746.8" y="799.5" font-size="13.2" fill="#000" text-anchor="end">472.472 mT</text>
<text x="1746" y="798.6" font-size="13.2" fill="#e8841e" stroke="#e8841e" stroke-width="0.3" text-anchor="end">472.472 mT</text>
<text x="1746.8" y="822.6" font-size="13.2" fill="#000" text-anchor="end">314.981 mT</text>
<text x="1746" y="821.7" font-size="13.2" fill="#e8841e" stroke="#e8841e" stroke-width="0.3" text-anchor="end">314.981 mT</text>
<text x="1746.8" y="845.6999999999999" font-size="13.2" fill="#000" text-anchor="end">157.491 mT</text>
<text x="1746" y="844.8" font-size="13.2" fill="#e8841e" stroke="#e8841e" stroke-width="0.3" text-anchor="end">157.491 mT</text>
<text x="1746.8" y="868.8" font-size="13.2" fill="#000" text-anchor="end">0 T</text>
<text x="1746" y="867.9" font-size="13.2" fill="#e8841e" stroke="#e8841e" stroke-width="0.3" text-anchor="end">0 T</text>
<text x="1746.8" y="911.6" font-size="13.2" fill="#000" text-anchor="end">2.276170 kA</text>
<text x="1746" y="910.7" font-size="13.2" fill="#6b1f8f" stroke="#6b1f8f" stroke-width="0.3" text-anchor="end">2.276170 kA</text>
<text x="1746.8" y="934.6999999999999" font-size="13.2" fill="#000" text-anchor="end">1.517446 kA</text>
<text x="1746" y="933.8" font-size="13.2" fill="#6b1f8f" stroke="#6b1f8f" stroke-width="0.3" text-anchor="end">1.517446 kA</text>
<text x="1746.8" y="957.8" font-size="13.2" fill="#000" text-anchor="end">758.723 A</text>
<text x="1746" y="956.9" font-size="13.2" fill="#6b1f8f" stroke="#6b1f8f" stroke-width="0.3" text-anchor="end">758.723 A</text>
<text x="1746.8" y="980.9" font-size="13.2" fill="#000" text-anchor="end">0 A</text>
<text x="1746" y="980.0" font-size="13.2" fill="#6b1f8f" stroke="#6b1f8f" stroke-width="0.3" text-anchor="end">0 A</text>
<text x="56.3" y="753.8" font-size="13.5" fill="#000" text-anchor="middle">0 s</text>
<text x="55.5" y="753" font-size="13.5" fill="#3a3a3a" text-anchor="middle">0 s</text>
<text x="231.20000000000002" y="753.8" font-size="13.5" fill="#000" text-anchor="middle">4.5 ms</text>
<text x="230.4" y="753" font-size="13.5" fill="#3a3a3a" text-anchor="middle">4.5 ms</text>
<text x="406.1" y="753.8" font-size="13.5" fill="#000" text-anchor="middle">9 ms</text>
<text x="405.3" y="753" font-size="13.5" fill="#3a3a3a" text-anchor="middle">9 ms</text>
<text x="581.0" y="753.8" font-size="13.5" fill="#000" text-anchor="middle">13.5 ms</text>
<text x="580.2" y="753" font-size="13.5" fill="#3a3a3a" text-anchor="middle">13.5 ms</text>
<text x="755.9" y="753.8" font-size="13.5" fill="#000" text-anchor="middle">18 ms</text>
<text x="755.1" y="753" font-size="13.5" fill="#3a3a3a" text-anchor="middle">18 ms</text>
<text x="930.8" y="753.8" font-size="13.5" fill="#000" text-anchor="middle">22.5 ms</text>
<text x="930.0" y="753" font-size="13.5" fill="#3a3a3a" text-anchor="middle">22.5 ms</text>
<text x="1105.7" y="753.8" font-size="13.5" fill="#000" text-anchor="middle">27 ms</text>
<text x="1104.9" y="753" font-size="13.5" fill="#3a3a3a" text-anchor="middle">27 ms</text>
<text x="1280.6" y="753.8" font-size="13.5" fill="#000" text-anchor="middle">31.5 ms</text>
<text x="1279.8" y="753" font-size="13.5" fill="#3a3a3a" text-anchor="middle">31.5 ms</text>
<text x="1455.5" y="753.8" font-size="13.5" fill="#000" text-anchor="middle">36 ms</text>
<text x="1454.7" y="753" font-size="13.5" fill="#3a3a3a" text-anchor="middle">36 ms</text>
<text x="1630.4" y="753.8" font-size="13.5" fill="#000" text-anchor="middle">40.5 ms</text>
<text x="1629.6000000000001" y="753" font-size="13.5" fill="#3a3a3a" text-anchor="middle">40.5 ms</text>
<path d="M1731 700.5 L1746 690 V711 Z" fill="#2323b4"/><rect x="1744" y="699" width="7" height="3" fill="#2323b4"/>
<path d="M1710 65 H1741.5 Q1744.3 65 1744.3 68 V96 Q1744.3 99.5 1741.5 97 Z" fill="#4e4e4e" stroke="#111" stroke-width="1.5" stroke-linejoin="round"/>
<circle cx="1737" cy="71.3" r="4.2" fill="none" stroke="#9c9c9c" stroke-width="1.8"/>
<line x1="1733.8" y1="74.6" x2="1728" y2="79.8" stroke="#9c9c9c" stroke-width="2.6" stroke-linecap="round"/>
<path d="M45 58 H65 L55 68 Z" fill="#f78c20"/>
<path d="M46 644 H64 V663 H59 L55 669 L51 663 H46 Z" fill="#000" stroke="#f08a24" stroke-width="2"/>
<text x="55" y="659" font-size="14" font-weight="bold" fill="#f08a24" text-anchor="middle">T</text>
</svg>

<div id="side"></div>
<svg class="abs" style="left:0;top:0" width="1920" height="40"><text x="1785.5" y="25.3" font-family='"Liberation Sans", sans-serif' font-size="30.5" font-weight="bold" fill="#fff" stroke="#fff" stroke-width="0.9" textLength="116.5" lengthAdjust="spacingAndGlyphs">Tektronix</text><path d="M1814.5 25.8 L1825 9.8 L1831 9.8 L1820.5 25.8 Z" fill="#1fb4d8"/></svg>
<div class="abs" style="left:1770px;top:30px;width:150px;text-align:center;font-size:15px;font-weight:bold;color:#e6e6e6;letter-spacing:0.4px">Add New...</div>
<div class="btn" style="left:1778px;top:54px;line-height:34px">Cursors</div>
<div class="btn" style="left:1850px;top:54px;line-height:34px">Callout</div>
<div class="btn" style="left:1778px;top:100px;line-height:34px">Measure</div>
<div class="btn" style="left:1850px;top:100px;line-height:34px">Search</div>
<div class="btn" style="left:1778px;top:146px;line-height:16px;padding-top:0px">Results<br>Table</div>
<div class="btn" style="left:1850px;top:146px;line-height:34px">Plot</div>
<div class="abs" style="left:1773px;top:189px;width:144px;height:1px;background:#6a625c"></div>
<div class="btn" style="left:1778px;top:196px;"><svg width="61" height="34" style="position:absolute;left:0;top:0"><rect x="18.5" y="5.5" width="21" height="20" fill="none" stroke="#c8c8c8" stroke-width="2" stroke-dasharray="2.4 2"/><circle cx="31.5" cy="13.5" r="4.8" fill="none" stroke="#c8c8c8" stroke-width="2"/><line x1="28" y1="17" x2="24" y2="20.5" stroke="#c8c8c8" stroke-width="2.6" stroke-linecap="round"/><path d="M37 20.5 L44.5 25 L41.5 26 L44 29.5 L42 30.5 L39.5 27 L37.5 29 Z" fill="#c8c8c8"/></svg></div>
<div class="btn" style="left:1850px;top:196px;line-height:34px">More...</div>
<div class="abs" style="left:1773px;top:241px;width:144px;height:1px;background:#6a625c"></div>
<div class="abs" style="left:1760px;top:502px;width:4px;height:4px;border-radius:2px;background:#c8c8c8"></div>
<div class="abs" style="left:1760px;top:510px;width:4px;height:4px;border-radius:2px;background:#c8c8c8"></div>
<div class="abs" style="left:1760px;top:519px;width:4px;height:4px;border-radius:2px;background:#c8c8c8"></div>
<div class="abs" style="left:3px;top:984px;width:90px;height:19px;background:#1c1c1c;border-radius:4px 4px 0 0;color:#f2e63c;font-size:14.5px;line-height:19px;padding-left:6px">Ch 1</div>
<div class="abs" style="left:3px;top:1003px;width:90px;height:2px;background:#b8c0c8"></div>
<div class="abs" style="left:3px;top:1005px;width:90px;height:17px;background:#f00;color:#fff;font-size:16px;line-height:15px;padding-left:16px;white-space:nowrap;overflow:hidden"><svg width="17" height="17" style="position:absolute;left:0px;top:0px"><path d="M8.5 1.5 L16 15.5 H1 Z" fill="#f4f000" stroke="#444" stroke-width="1"/><rect x="7.6" y="6" width="1.8" height="6.5" fill="#555"/></svg>Clipping</div>
<div class="abs" style="left:3px;top:1022px;width:90px;height:56px;background:#c8c8c8;border-radius:0 0 4px 4px;color:#111;font-size:14.3px;line-height:18.8px;padding-left:6px;overflow:hidden"><div style="position:absolute;left:6px;top:1.2999999999999545px"><div style="height:18.8px;white-space:nowrap;font-weight:normal">5 V/div</div><div style="height:18.8px;white-space:nowrap;font-weight:normal">1 M&#937;</div><div style="height:18.8px;white-space:nowrap;font-weight:normal">200 kHz</div></div><div style="position:absolute;right:6px;bottom:7px;font-size:11px;line-height:11px;color:#111">B<span style="font-size:10px;position:relative;top:3px;left:-1px">w</span></div></div>
<div class="abs" style="left:98px;top:1003px;width:90px;height:19px;background:#1f4042;border-radius:4px 4px 0 0;color:#2cd8e2;font-size:14.5px;line-height:19px;padding-left:6px">Ch 2</div>
<div class="abs" style="left:98px;top:1022px;width:90px;height:1px;background:#a8a8a8"></div>
<div class="abs" style="left:98px;top:1023px;width:90px;height:55px;background:#c8c8c8;border-radius:0 0 4px 4px;color:#111;font-size:14.3px;line-height:18.8px;padding-left:6px;overflow:hidden"><div style="position:absolute;left:6px;top:0.2999999999999545px"><div style="height:18.8px;white-space:nowrap;font-weight:normal">250 mV/div</div><div style="height:18.8px;white-space:nowrap;font-weight:normal">1 M&#937;</div><div style="height:18.8px;white-space:nowrap;font-weight:normal">200 kHz</div></div><div style="position:absolute;right:6px;bottom:7px;font-size:11px;line-height:11px;color:#111">B<span style="font-size:10px;position:relative;top:3px;left:-1px">w</span></div></div>
<div class="abs" style="left:193px;top:1003px;width:90px;height:19px;background:#45242a;border-radius:4px 4px 0 0;color:#ffffff;font-size:14.5px;line-height:19px;padding-left:6px">Ch 3</div>
<div class="abs" style="left:193px;top:1022px;width:90px;height:1px;background:#a8a8a8"></div>
<div class="abs" style="left:193px;top:1023px;width:90px;height:55px;background:#c8c8c8;border-radius:0 0 4px 4px;color:#111;font-size:14.3px;line-height:18.8px;padding-left:6px;overflow:hidden"><div style="position:absolute;left:6px;top:0.2999999999999545px"><div style="height:18.8px;white-space:nowrap;font-weight:normal">450 mV/div</div><div style="height:18.8px;white-space:nowrap;font-weight:normal">1 M&#937;</div><div style="height:18.8px;white-space:nowrap;font-weight:normal">200 kHz</div></div><div style="position:absolute;right:6px;bottom:7px;font-size:11px;line-height:11px;color:#111">B<span style="font-size:10px;position:relative;top:3px;left:-1px">w</span></div></div>
<div class="abs" style="left:288px;top:1003px;width:90px;height:19px;background:#323c22;border-radius:4px 4px 0 0;color:#90d038;font-size:14.5px;line-height:19px;padding-left:6px">Ch 4</div>
<div class="abs" style="left:288px;top:1022px;width:90px;height:1px;background:#a8a8a8"></div>
<div class="abs" style="left:288px;top:1023px;width:90px;height:55px;background:#c8c8c8;border-radius:0 0 4px 4px;color:#111;font-size:14.3px;line-height:18.8px;padding-left:6px;overflow:hidden"><div style="position:absolute;left:6px;top:0.2999999999999545px"><div style="height:18.8px;white-space:nowrap;font-weight:normal">200 mV/div</div><div style="height:18.8px;white-space:nowrap;font-weight:normal">1 M&#937;</div><div style="height:18.8px;white-space:nowrap;font-weight:normal">200 kHz</div></div><div style="position:absolute;right:6px;bottom:7px;font-size:11px;line-height:11px;color:#111">B<span style="font-size:10px;position:relative;top:3px;left:-1px">w</span></div></div>
<div class="abs" style="left:383px;top:1003px;width:90px;height:19px;background:#4a3422;border-radius:4px 4px 0 0;color:#f8963a;font-size:14.5px;line-height:19px;padding-left:6px">Ch 5</div>
<div class="abs" style="left:383px;top:1022px;width:90px;height:1px;background:#a8a8a8"></div>
<div class="abs" style="left:383px;top:1023px;width:90px;height:55px;background:#c8c8c8;border-radius:0 0 4px 4px;color:#111;font-size:14.3px;line-height:18.8px;padding-left:6px;overflow:hidden"><div style="position:absolute;left:6px;top:0.2999999999999545px"><div style="height:18.8px;white-space:nowrap;font-weight:normal">1 V/div</div><div style="height:18.8px;white-space:nowrap;font-weight:normal">1 M&#937;</div><div style="height:18.8px;white-space:nowrap;font-weight:normal">200 kHz</div></div><div style="position:absolute;right:6px;bottom:7px;font-size:11px;line-height:11px;color:#111">B<span style="font-size:10px;position:relative;top:3px;left:-1px">w</span></div></div>
<div class="abs" style="left:478px;top:984px;width:90px;height:19px;background:#2a2ac6;border-radius:4px 4px 0 0;color:#ffffff;font-size:14.5px;line-height:19px;padding-left:6px">Ch 6</div>
<div class="abs" style="left:478px;top:1003px;width:90px;height:2px;background:#b8c0c8"></div>
<div class="abs" style="left:478px;top:1005px;width:90px;height:17px;background:#f00;color:#fff;font-size:16px;line-height:15px;padding-left:16px;white-space:nowrap;overflow:hidden"><svg width="17" height="17" style="position:absolute;left:0px;top:0px"><path d="M8.5 1.5 L16 15.5 H1 Z" fill="#f4f000" stroke="#444" stroke-width="1"/><rect x="7.6" y="6" width="1.8" height="6.5" fill="#555"/></svg>Clipping</div>
<div class="abs" style="left:478px;top:1022px;width:90px;height:56px;background:#c8c8c8;border-radius:0 0 4px 4px;color:#111;font-size:14.3px;line-height:18.8px;padding-left:6px;overflow:hidden"><div style="position:absolute;left:6px;top:1.2999999999999545px"><div style="height:18.8px;white-space:nowrap;font-weight:normal">750 mV/div</div><div style="height:18.8px;white-space:nowrap;font-weight:normal">1 M&#937;</div><div style="height:18.8px;white-space:nowrap;font-weight:normal">200 kHz</div></div><div style="position:absolute;right:6px;bottom:7px;font-size:11px;line-height:11px;color:#111">B<span style="font-size:10px;position:relative;top:3px;left:-1px">w</span></div></div>
<div class="abs" style="left:573px;top:984px;width:90px;height:19px;background:#4a3420;border-radius:4px 4px 0 0;color:#f49a30;font-size:14.5px;line-height:19px;padding-left:6px">Math 1</div>
<div class="abs" style="left:573px;top:1003px;width:90px;height:2px;background:#b8c0c8"></div>
<div class="abs" style="left:573px;top:1005px;width:90px;height:17px;background:#f00;color:#fff;font-size:16px;line-height:15px;padding-left:16px;white-space:nowrap;overflow:hidden"><svg width="17" height="17" style="position:absolute;left:0px;top:0px"><path d="M8.5 1.5 L16 15.5 H1 Z" fill="#f4f000" stroke="#444" stroke-width="1"/><rect x="7.6" y="6" width="1.8" height="6.5" fill="#555"/></svg>Empty i...</div>
<div class="abs" style="left:573px;top:1022px;width:90px;height:56px;background:#c8c8c8;border-radius:0 0 4px 4px;color:#111;font-size:14.3px;line-height:18.8px;padding-left:6px;overflow:hidden"><div style="position:absolute;left:6px;top:1.2999999999999545px"><div style="height:18.8px;white-space:nowrap;font-weight:bold">78.7 mT/div</div><div style="height:18.8px;white-space:nowrap;font-weight:normal">Intg(Ch2)...</div></div></div>
<div class="abs" style="left:668px;top:984px;width:90px;height:19px;background:#2e2232;border-radius:4px 4px 0 0;color:#ffffff;font-size:14.5px;line-height:19px;padding-left:6px">Math 2</div>
<div class="abs" style="left:668px;top:1003px;width:90px;height:2px;background:#b8c0c8"></div>
<div class="abs" style="left:668px;top:1005px;width:90px;height:17px;background:#f00;color:#fff;font-size:16px;line-height:15px;padding-left:16px;white-space:nowrap;overflow:hidden"><svg width="17" height="17" style="position:absolute;left:0px;top:0px"><path d="M8.5 1.5 L16 15.5 H1 Z" fill="#f4f000" stroke="#444" stroke-width="1"/><rect x="7.6" y="6" width="1.8" height="6.5" fill="#555"/></svg>Empty i...</div>
<div class="abs" style="left:668px;top:1022px;width:90px;height:56px;background:#c8c8c8;border-radius:0 0 4px 4px;color:#111;font-size:14.3px;line-height:18.8px;padding-left:6px;overflow:hidden"><div style="position:absolute;left:6px;top:1.2999999999999545px"><div style="height:18.8px;white-space:nowrap;font-weight:bold">379.36 A/...</div><div style="height:18.8px;white-space:nowrap;font-weight:normal">-Intg(Ch3...</div></div></div>
<div class="abs" style="left:1118px;top:1000px;width:1px;height:78px;background:#5e5650"></div>
<div class="abs" style="left:1269px;top:1000px;width:1px;height:78px;background:#5e5650"></div>
<div class="abs" style="left:1811px;top:1000px;width:1px;height:78px;background:#5e5650"></div>
<div class="abs" style="left:1129px;top:999px;width:40px;height:79px;border-radius:6px;border:1px solid #6e645c;background:linear-gradient(#3a3a3a,#2a2a2a 40%,#262626);color:#f0f0f0;font-size:15px;line-height:16.2px;text-align:center;padding-top:20px"><div style="position:absolute;left:3px;top:7.5px;width:32px;height:2.2px;border-radius:1px;background:#d02020"></div>Add<br>New<br>Math</div>
<div class="abs" style="left:1174px;top:999px;width:40px;height:79px;border-radius:6px;border:1px solid #6e645c;background:linear-gradient(#3a3a3a,#2a2a2a 40%,#262626);color:#f0f0f0;font-size:15px;line-height:16.2px;text-align:center;padding-top:20px"><div style="position:absolute;left:3px;top:7.5px;width:32px;height:2.2px;border-radius:1px;background:#c8c8e0"></div>Add<br>New<br>Ref</div>
<div class="abs" style="left:1219px;top:999px;width:40px;height:79px;border-radius:6px;border:1px solid #6e645c;background:linear-gradient(#3a3a3a,#2a2a2a 40%,#262626);color:#f0f0f0;font-size:15px;line-height:16.2px;text-align:center;padding-top:20px"><div style="position:absolute;left:3px;top:7.5px;width:32px;height:2.2px;border-radius:1px;background:#c040f0"></div>Add<br>New<br>Bus</div>
<div class="abs" style="left:1281px;top:1003px;width:199px;height:75px;border:1px solid #111;border-radius:4px;background:#c8c8c8;overflow:hidden"><div style="position:absolute;left:0;top:0;width:100%;height:18px;background:#5a5a5a;color:#f0f0f0;font-size:15.5px;line-height:17px;padding-left:5px">Horizontal</div><div style="position:absolute;left:0;top:18px;width:100%;height:2px;background:#9a9a9a"></div><div style="position:absolute;left:4px;top:19px;font-size:14.5px;line-height:18.8px;color:#111">4.5 ms/div<br>SR: 1 MS/s<br>RL: 45 kpts</div><div style="position:absolute;left:110px;top:19px;font-size:14.5px;line-height:18.8px;color:#111">45 ms<br>1 &#181;s/pt<br><span style="padding-left:14px">3%</span></div><svg style="position:absolute;left:109px;top:59px" width="11" height="14"><path d="M1 1 H10 V9 H7 L5.5 12 L4 9 H1 Z" fill="#000" stroke="#f08a24" stroke-width="1.1"/><text x="5.5" y="8.2" font-size="8" font-weight="bold" fill="#fff" text-anchor="middle" font-family="Liberation Sans">T</text></svg></div>
<div class="abs" style="left:1486px;top:1003px;width:158px;height:75px;border:1px solid #111;border-radius:4px;background:#c8c8c8;overflow:hidden"><div style="position:absolute;left:0;top:0;width:100%;height:18px;background:#5a5a5a;color:#f0f0f0;font-size:15.5px;line-height:17px;padding-left:5px">Trigger</div><div style="position:absolute;left:0;top:18px;width:100%;height:2px;background:#9a9a9a"></div><div style="position:absolute;left:4px;top:20px;width:29px;height:16px;border-radius:5px;background:#2222c0;border:1px solid #111;color:#fff;font-size:14px;line-height:14px;text-align:center">6</div><svg style="position:absolute;left:43px;top:21px" width="18" height="14"><path d="M1 12.5 H5 L13 2 H17" fill="none" stroke="#2a2aa0" stroke-width="1.3"/></svg><div style="position:absolute;left:70px;top:19px;font-size:14.5px;line-height:18.8px;color:#111">3 V</div></div>
<div class="abs" style="left:1651px;top:1003px;width:148px;height:75px;border:1px solid #111;border-radius:4px;background:#c8c8c8;overflow:hidden"><div style="position:absolute;left:0;top:0;width:100%;height:18px;background:#5a5a5a;color:#f0f0f0;font-size:15.5px;line-height:17px;padding-left:5px">Acquisition</div><div style="position:absolute;left:0;top:18px;width:100%;height:2px;background:#9a9a9a"></div><div style="position:absolute;left:4px;top:19px;font-size:14.5px;line-height:18.8px;color:#111;white-space:nowrap">Manual,<span style="position:absolute;left:81px">Analyze</span><br>High Res: 16 bits<br>Single: 1 /1</div></div>
<div class="abs" style="left:1822px;top:999px;width:90px;height:36px;border-radius:6px;border:1px solid #777;background:#ff1f26;color:#fff;font-size:14px;font-weight:bold;text-align:center;line-height:31px">Stopped</div>
<div class="abs" style="left:1822px;top:1040px;width:90px;height:38px;border-radius:5px;background:#c8c8c8;border:1px solid #555;color:#111;font-size:15px;line-height:16.5px;text-align:center;padding-top:1px;white-space:nowrap">27 Aug 2025<br>11:25:34 AM</div>
</body></html>
